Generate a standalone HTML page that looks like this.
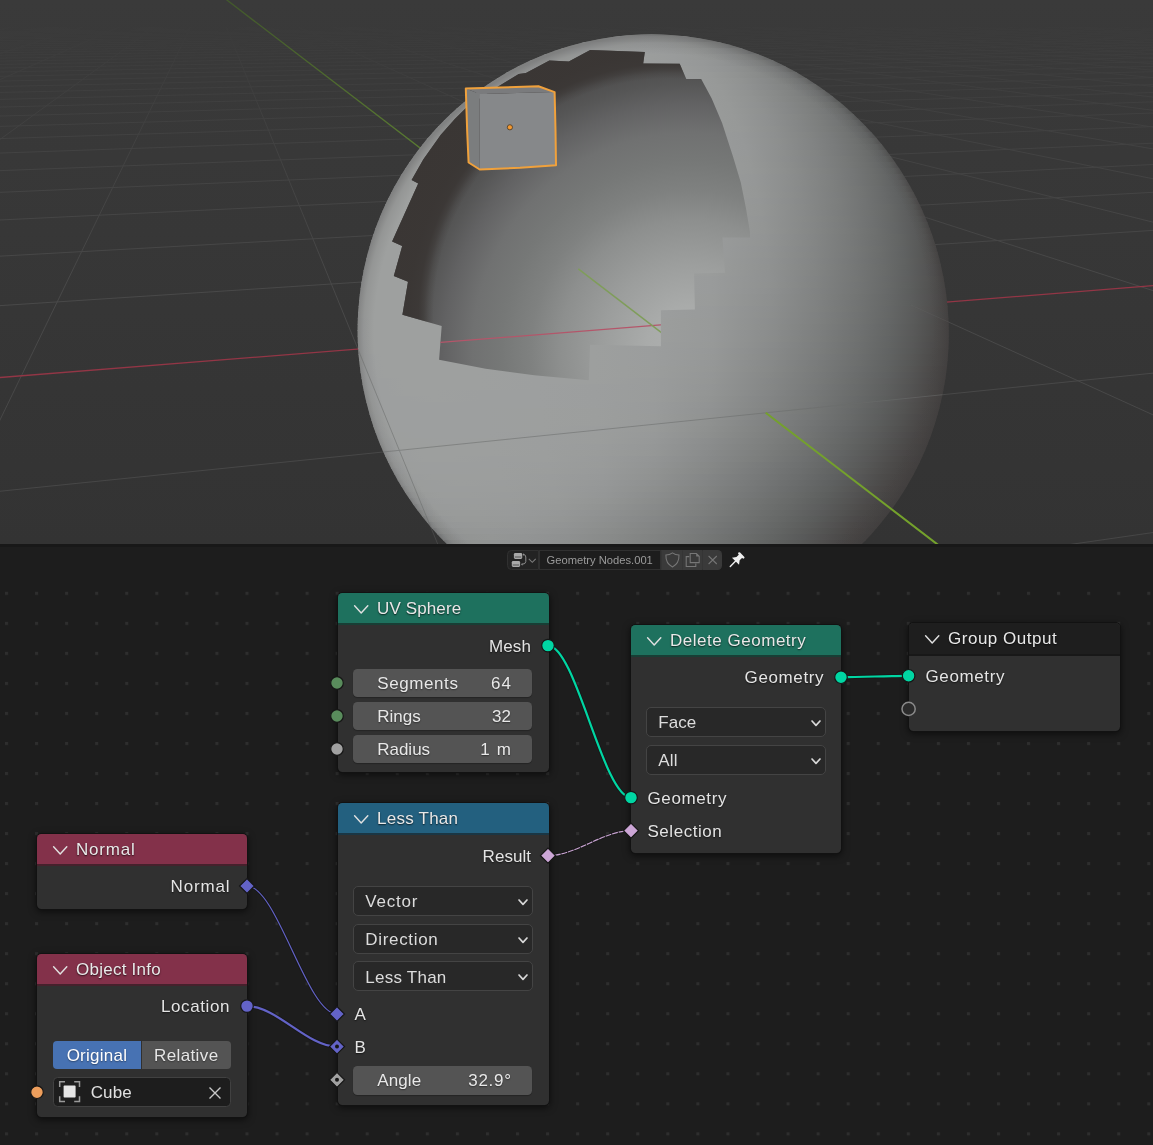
<!DOCTYPE html>
<html><head><meta charset="utf-8"><title>Blender</title>
<style>
html,body{margin:0;padding:0;background:#1d1d1d;}
body{width:1153px;height:1145px;overflow:hidden;position:relative;font-family:"Liberation Sans",sans-serif;}
#sep{position:absolute;left:0;top:544px;width:1153px;height:2.7px;background:#181818;z-index:3}
#ne{position:absolute;left:0;top:545px;width:1153px;height:600px;background-color:#1d1d1d;overflow:hidden;
}
#dots{position:absolute;left:0;top:0;width:1153px;height:600px}
#hdr{will-change:transform;position:absolute;left:507.2px;top:5.2px;width:214.7px;height:19.5px;}
.hb{position:absolute;top:0;height:19.5px;background:#232323;box-sizing:border-box;border:1px solid #303030;overflow:hidden}
.hl{background:#3a3a3a;border-color:#3a3a3a;border-left-color:#353535}
.ht{position:absolute;left:7px;top:2.5px;font-size:11.2px;color:#9b9b9b;white-space:nowrap;line-height:13px}
.node{will-change:transform;position:absolute;background:#303030;border-radius:4.5px;box-shadow:0 0 0 1px #121212,0 2px 7px 1px rgba(0,0,0,.55);color:#e4e4e4;font-size:17px;}
.nh{position:absolute;left:0;top:0;right:0;height:32.2px;border-radius:4.5px 4.5px 0 0;border-bottom:2px solid rgba(20,20,20,.55);box-sizing:border-box}
.nh span{position:absolute;left:39px;top:6.2px;line-height:20px;white-space:nowrap;text-shadow:0 1px 1.5px rgba(0,0,0,.7);color:#e9e9e9}
.geo{background:#1e715e}.conv{background:#23607f}.inpt{background:#83314a}.grp{background:#1e1e1e}
.chev{position:absolute;left:16px;top:11.2px;width:14px;height:10px;overflow:visible}
.chev path{fill:none;stroke:#e0e0e0;stroke-width:1.45;stroke-linecap:round;stroke-linejoin:round}
.out{margin-top:0.9px;position:absolute;right:17.5px;line-height:20px;height:20px;text-align:right;white-space:nowrap;text-shadow:0 1px 1.5px rgba(0,0,0,.6)}
.inp{margin-top:0.9px;position:absolute;left:16.5px;line-height:20px;height:20px;white-space:nowrap;text-shadow:0 1px 1.5px rgba(0,0,0,.6)}
.fld{position:absolute;left:15.2px;width:179.3px;height:28.5px;background:#545454;border-radius:4.5px;box-shadow:0 1px 1px rgba(0,0,0,.25)}
.fld span{position:absolute;top:5.3px;line-height:20px;white-space:nowrap;text-shadow:0 1px 1.5px rgba(0,0,0,.45);color:#e8e8e8}
.fld .l{left:24px}.fld .r{right:21.5px}
.dd{position:absolute;left:15.3px;width:180px;height:30px;background:#282828;border:1px solid #444;border-radius:5px;box-sizing:border-box}
.dd span{position:absolute;left:11px;top:5.2px;line-height:20px;white-space:nowrap;color:#dcdcdc}
.dchev{position:absolute;right:4.5px;top:11.5px;width:10px;height:7px;overflow:visible}
.dchev path{fill:none;stroke:#d8d8d8;stroke-width:1.7;stroke-linecap:round;stroke-linejoin:round}
.btn{position:absolute;height:28.2px;background:#545454;line-height:29.5px;text-align:center;color:#e6e6e6;text-shadow:0 1px 1.5px rgba(0,0,0,.4)}
.btn.on{background:#4772b3;color:#fff}
.txt{position:absolute;left:15.8px;width:178.6px;height:30px;background:#1d1d1d;border:1px solid #414141;border-radius:4.5px;box-sizing:border-box}
.txt span{position:absolute;left:37px;top:4.4px;line-height:20px;color:#e0e0e0}
</style>
</head>
<body>
<svg id="vp" width="1153" height="544" viewBox="0 0 1153 544" style="position:absolute;left:0;top:0;background:#363636">
<defs>
<linearGradient id="bg" x1="0" y1="0" x2="0" y2="544" gradientUnits="userSpaceOnUse"><stop offset="0" stop-color="#3a3a3a"/><stop offset="1" stop-color="#333333"/></linearGradient>
<linearGradient id="gfade" x1="0" y1="0" x2="0" y2="544" gradientUnits="userSpaceOnUse">
<stop offset="0.03" stop-color="#fff" stop-opacity="0"/><stop offset="0.12" stop-color="#fff" stop-opacity="0.25"/><stop offset="0.3" stop-color="#fff" stop-opacity="0.6"/><stop offset="0.55" stop-color="#fff" stop-opacity="1"/>
</linearGradient>
<linearGradient id="gline" gradientUnits="userSpaceOnUse" x1="215" y1="-10" x2="420" y2="147"><stop offset="0" stop-color="#41572b"/><stop offset="0.5" stop-color="#4d692d"/><stop offset="1" stop-color="#5a7c31"/></linearGradient>
<mask id="gmask" maskUnits="userSpaceOnUse" x="0" y="0" width="1153" height="544"><rect width="1153" height="544" fill="url(#gfade)"/></mask>
<radialGradient id="rim" gradientUnits="userSpaceOnUse" cx="0" cy="0" r="1" gradientTransform="translate(653.2 332) rotate(71) scale(298 295.3)">
<stop offset="0.94" stop-color="#3d3b3c" stop-opacity="0"/><stop offset="0.975" stop-color="#3d3b3c" stop-opacity="0.1"/><stop offset="1" stop-color="#3d3b3c" stop-opacity="0.3"/>
</radialGradient>
<radialGradient id="inner" gradientUnits="userSpaceOnUse" cx="690" cy="350" r="290">
<stop offset="0" stop-color="#aeb0af"/><stop offset="0.15" stop-color="#a9abaa"/><stop offset="0.3" stop-color="#9c9e9d"/><stop offset="0.45" stop-color="#8d8f8e"/><stop offset="0.55" stop-color="#7f8180"/><stop offset="0.65" stop-color="#767877"/><stop offset="0.75" stop-color="#707171"/><stop offset="0.85" stop-color="#626263"/><stop offset="0.92" stop-color="#565656"/><stop offset="1" stop-color="#4c4b4b"/>
</radialGradient>
<radialGradient id="ishadow" gradientUnits="userSpaceOnUse" cx="670" cy="315" r="300">
<stop offset="0.788" stop-color="#3a3634" stop-opacity="0"/><stop offset="0.806" stop-color="#3a3634" stop-opacity="0.28"/><stop offset="0.82" stop-color="#3a3634" stop-opacity="0.62"/><stop offset="0.838" stop-color="#3a3634" stop-opacity="0.9"/><stop offset="0.87" stop-color="#3a3634" stop-opacity="0.97"/><stop offset="1" stop-color="#3a3634" stop-opacity="1"/>
</radialGradient>
<linearGradient id="r0" gradientUnits="userSpaceOnUse" x1="608.2" y1="0" x2="694.9" y2="0"><stop offset="0" stop-color="#979999"/><stop offset="0.008" stop-color="#979999"/><stop offset="0.02" stop-color="#979998"/><stop offset="0.04" stop-color="#979998"/><stop offset="0.07" stop-color="#969898"/><stop offset="0.12" stop-color="#969897"/><stop offset="0.2" stop-color="#959796"/><stop offset="0.3" stop-color="#949695"/><stop offset="0.4" stop-color="#929494"/><stop offset="0.5" stop-color="#909292"/><stop offset="0.6" stop-color="#8f9190"/><stop offset="0.7" stop-color="#8d8f8e"/><stop offset="0.78" stop-color="#8c8e8d"/><stop offset="0.85" stop-color="#8a8c8c"/><stop offset="0.9" stop-color="#898b8b"/><stop offset="0.94" stop-color="#898b8a"/><stop offset="0.97" stop-color="#888a8a"/><stop offset="0.985" stop-color="#888a89"/><stop offset="1" stop-color="#888a89"/></linearGradient>
<linearGradient id="r1" gradientUnits="userSpaceOnUse" x1="599.2" y1="0" x2="704.0" y2="0"><stop offset="0" stop-color="#989a9a"/><stop offset="0.008" stop-color="#999b9a"/><stop offset="0.02" stop-color="#999b9a"/><stop offset="0.04" stop-color="#999b9b"/><stop offset="0.07" stop-color="#999b9b"/><stop offset="0.12" stop-color="#999b9b"/><stop offset="0.2" stop-color="#999b9b"/><stop offset="0.3" stop-color="#999b9a"/><stop offset="0.4" stop-color="#989a9a"/><stop offset="0.5" stop-color="#979999"/><stop offset="0.6" stop-color="#969897"/><stop offset="0.7" stop-color="#949695"/><stop offset="0.78" stop-color="#919393"/><stop offset="0.85" stop-color="#8f9191"/><stop offset="0.9" stop-color="#8d8f8e"/><stop offset="0.94" stop-color="#8b8d8d"/><stop offset="0.97" stop-color="#898b8b"/><stop offset="0.985" stop-color="#888a8a"/><stop offset="1" stop-color="#868887"/></linearGradient>
<linearGradient id="r2" gradientUnits="userSpaceOnUse" x1="573.0" y1="0" x2="730.2" y2="0"><stop offset="0" stop-color="#9a9c9b"/><stop offset="0.008" stop-color="#9b9d9c"/><stop offset="0.02" stop-color="#9b9d9c"/><stop offset="0.04" stop-color="#9b9d9d"/><stop offset="0.07" stop-color="#9b9d9d"/><stop offset="0.12" stop-color="#9b9d9d"/><stop offset="0.2" stop-color="#9b9d9d"/><stop offset="0.3" stop-color="#9b9d9c"/><stop offset="0.4" stop-color="#9a9c9c"/><stop offset="0.5" stop-color="#999b9b"/><stop offset="0.6" stop-color="#979999"/><stop offset="0.7" stop-color="#959796"/><stop offset="0.78" stop-color="#929493"/><stop offset="0.85" stop-color="#8e908f"/><stop offset="0.9" stop-color="#8b8d8c"/><stop offset="0.94" stop-color="#888a89"/><stop offset="0.97" stop-color="#858787"/><stop offset="0.985" stop-color="#838585"/><stop offset="1" stop-color="#808281"/></linearGradient>
<linearGradient id="r3" gradientUnits="userSpaceOnUse" x1="554.0" y1="0" x2="749.3" y2="0"><stop offset="0" stop-color="#9b9d9c"/><stop offset="0.008" stop-color="#9c9e9d"/><stop offset="0.02" stop-color="#9c9e9d"/><stop offset="0.04" stop-color="#9c9e9d"/><stop offset="0.07" stop-color="#9c9e9e"/><stop offset="0.12" stop-color="#9c9e9e"/><stop offset="0.2" stop-color="#9c9e9e"/><stop offset="0.3" stop-color="#9c9e9d"/><stop offset="0.4" stop-color="#9b9d9d"/><stop offset="0.5" stop-color="#9a9c9c"/><stop offset="0.6" stop-color="#989a9a"/><stop offset="0.7" stop-color="#969897"/><stop offset="0.78" stop-color="#929493"/><stop offset="0.85" stop-color="#8d8f8f"/><stop offset="0.9" stop-color="#898b8b"/><stop offset="0.94" stop-color="#868887"/><stop offset="0.97" stop-color="#828484"/><stop offset="0.985" stop-color="#808282"/><stop offset="1" stop-color="#7b7d7d"/></linearGradient>
<linearGradient id="r4" gradientUnits="userSpaceOnUse" x1="538.4" y1="0" x2="764.9" y2="0"><stop offset="0" stop-color="#9b9d9d"/><stop offset="0.008" stop-color="#9c9e9e"/><stop offset="0.02" stop-color="#9c9e9e"/><stop offset="0.04" stop-color="#9c9e9e"/><stop offset="0.07" stop-color="#9d9f9e"/><stop offset="0.12" stop-color="#9d9f9e"/><stop offset="0.2" stop-color="#9d9f9e"/><stop offset="0.3" stop-color="#9c9e9e"/><stop offset="0.4" stop-color="#9c9e9d"/><stop offset="0.5" stop-color="#9b9d9c"/><stop offset="0.6" stop-color="#999b9b"/><stop offset="0.7" stop-color="#969897"/><stop offset="0.78" stop-color="#929493"/><stop offset="0.85" stop-color="#8c8e8e"/><stop offset="0.9" stop-color="#888a89"/><stop offset="0.94" stop-color="#848685"/><stop offset="0.97" stop-color="#808281"/><stop offset="0.985" stop-color="#7d7f7f"/><stop offset="1" stop-color="#787a79"/></linearGradient>
<linearGradient id="r5" gradientUnits="userSpaceOnUse" x1="525.1" y1="0" x2="778.4" y2="0"><stop offset="0" stop-color="#9c9e9d"/><stop offset="0.008" stop-color="#9c9e9e"/><stop offset="0.02" stop-color="#9d9f9e"/><stop offset="0.04" stop-color="#9d9f9e"/><stop offset="0.07" stop-color="#9d9f9e"/><stop offset="0.12" stop-color="#9d9f9e"/><stop offset="0.2" stop-color="#9d9f9e"/><stop offset="0.3" stop-color="#9d9f9e"/><stop offset="0.4" stop-color="#9c9e9e"/><stop offset="0.5" stop-color="#9b9d9d"/><stop offset="0.6" stop-color="#999b9b"/><stop offset="0.7" stop-color="#969898"/><stop offset="0.78" stop-color="#919393"/><stop offset="0.85" stop-color="#8b8d8d"/><stop offset="0.9" stop-color="#868888"/><stop offset="0.94" stop-color="#828483"/><stop offset="0.97" stop-color="#7d7f7f"/><stop offset="0.985" stop-color="#7a7c7c"/><stop offset="1" stop-color="#747676"/></linearGradient>
<linearGradient id="r6" gradientUnits="userSpaceOnUse" x1="513.2" y1="0" x2="790.3" y2="0"><stop offset="0" stop-color="#9c9e9e"/><stop offset="0.008" stop-color="#9d9f9e"/><stop offset="0.02" stop-color="#9d9f9e"/><stop offset="0.04" stop-color="#9d9f9e"/><stop offset="0.07" stop-color="#9d9f9f"/><stop offset="0.12" stop-color="#9d9f9f"/><stop offset="0.2" stop-color="#9d9f9f"/><stop offset="0.3" stop-color="#9d9f9e"/><stop offset="0.4" stop-color="#9c9e9e"/><stop offset="0.5" stop-color="#9b9d9d"/><stop offset="0.6" stop-color="#9a9c9b"/><stop offset="0.7" stop-color="#969898"/><stop offset="0.78" stop-color="#919393"/><stop offset="0.85" stop-color="#8b8d8c"/><stop offset="0.9" stop-color="#858787"/><stop offset="0.94" stop-color="#808282"/><stop offset="0.97" stop-color="#7b7d7d"/><stop offset="0.985" stop-color="#787a7a"/><stop offset="1" stop-color="#727473"/></linearGradient>
<linearGradient id="r7" gradientUnits="userSpaceOnUse" x1="502.6" y1="0" x2="801.0" y2="0"><stop offset="0" stop-color="#9c9e9e"/><stop offset="0.008" stop-color="#9d9f9e"/><stop offset="0.02" stop-color="#9d9f9f"/><stop offset="0.04" stop-color="#9d9f9f"/><stop offset="0.07" stop-color="#9d9f9f"/><stop offset="0.12" stop-color="#9d9f9f"/><stop offset="0.2" stop-color="#9d9f9f"/><stop offset="0.3" stop-color="#9d9f9e"/><stop offset="0.4" stop-color="#9d9f9e"/><stop offset="0.5" stop-color="#9c9e9d"/><stop offset="0.6" stop-color="#9a9c9c"/><stop offset="0.7" stop-color="#979998"/><stop offset="0.78" stop-color="#919392"/><stop offset="0.85" stop-color="#8a8c8b"/><stop offset="0.9" stop-color="#848685"/><stop offset="0.94" stop-color="#7e8080"/><stop offset="0.97" stop-color="#797b7b"/><stop offset="0.985" stop-color="#767877"/><stop offset="1" stop-color="#6f7170"/></linearGradient>
<linearGradient id="r8" gradientUnits="userSpaceOnUse" x1="492.8" y1="0" x2="810.8" y2="0"><stop offset="0" stop-color="#9d9f9e"/><stop offset="0.008" stop-color="#9d9f9f"/><stop offset="0.02" stop-color="#9d9f9f"/><stop offset="0.04" stop-color="#9d9f9f"/><stop offset="0.07" stop-color="#9d9f9f"/><stop offset="0.12" stop-color="#9d9f9f"/><stop offset="0.2" stop-color="#9d9f9f"/><stop offset="0.3" stop-color="#9d9f9f"/><stop offset="0.4" stop-color="#9d9f9e"/><stop offset="0.5" stop-color="#9c9e9d"/><stop offset="0.6" stop-color="#9a9c9c"/><stop offset="0.7" stop-color="#979998"/><stop offset="0.78" stop-color="#919392"/><stop offset="0.85" stop-color="#898b8b"/><stop offset="0.9" stop-color="#838584"/><stop offset="0.94" stop-color="#7d7f7e"/><stop offset="0.97" stop-color="#777979"/><stop offset="0.985" stop-color="#747675"/><stop offset="1" stop-color="#6c6e6e"/></linearGradient>
<linearGradient id="r9" gradientUnits="userSpaceOnUse" x1="483.9" y1="0" x2="819.8" y2="0"><stop offset="0" stop-color="#9d9f9e"/><stop offset="0.008" stop-color="#9d9f9f"/><stop offset="0.02" stop-color="#9d9f9f"/><stop offset="0.04" stop-color="#9d9f9f"/><stop offset="0.07" stop-color="#9d9f9f"/><stop offset="0.12" stop-color="#9d9f9f"/><stop offset="0.2" stop-color="#9d9f9f"/><stop offset="0.3" stop-color="#9d9f9f"/><stop offset="0.4" stop-color="#9d9f9e"/><stop offset="0.5" stop-color="#9c9e9e"/><stop offset="0.6" stop-color="#9a9c9c"/><stop offset="0.7" stop-color="#979998"/><stop offset="0.78" stop-color="#909292"/><stop offset="0.85" stop-color="#888a8a"/><stop offset="0.9" stop-color="#828483"/><stop offset="0.94" stop-color="#7b7d7d"/><stop offset="0.97" stop-color="#767877"/><stop offset="0.985" stop-color="#727473"/><stop offset="1" stop-color="#6a6c6b"/></linearGradient>
<linearGradient id="r10" gradientUnits="userSpaceOnUse" x1="475.6" y1="0" x2="828.1" y2="0"><stop offset="0" stop-color="#9d9f9e"/><stop offset="0.008" stop-color="#9d9f9f"/><stop offset="0.02" stop-color="#9d9f9f"/><stop offset="0.04" stop-color="#9d9f9f"/><stop offset="0.07" stop-color="#9ea09f"/><stop offset="0.12" stop-color="#9ea09f"/><stop offset="0.2" stop-color="#9d9f9f"/><stop offset="0.3" stop-color="#9d9f9f"/><stop offset="0.4" stop-color="#9d9f9e"/><stop offset="0.5" stop-color="#9c9e9e"/><stop offset="0.6" stop-color="#9b9d9c"/><stop offset="0.7" stop-color="#979998"/><stop offset="0.78" stop-color="#909291"/><stop offset="0.85" stop-color="#888a89"/><stop offset="0.9" stop-color="#818382"/><stop offset="0.94" stop-color="#7a7c7c"/><stop offset="0.97" stop-color="#747676"/><stop offset="0.985" stop-color="#707272"/><stop offset="1" stop-color="#686a69"/></linearGradient>
<linearGradient id="r11" gradientUnits="userSpaceOnUse" x1="467.9" y1="0" x2="835.9" y2="0"><stop offset="0" stop-color="#9d9f9e"/><stop offset="0.008" stop-color="#9d9f9f"/><stop offset="0.02" stop-color="#9d9f9f"/><stop offset="0.04" stop-color="#9d9f9f"/><stop offset="0.07" stop-color="#9ea09f"/><stop offset="0.12" stop-color="#9ea09f"/><stop offset="0.2" stop-color="#9ea09f"/><stop offset="0.3" stop-color="#9d9f9f"/><stop offset="0.4" stop-color="#9d9f9f"/><stop offset="0.5" stop-color="#9c9e9e"/><stop offset="0.6" stop-color="#9b9d9c"/><stop offset="0.7" stop-color="#979998"/><stop offset="0.78" stop-color="#909291"/><stop offset="0.85" stop-color="#878988"/><stop offset="0.9" stop-color="#808281"/><stop offset="0.94" stop-color="#797b7a"/><stop offset="0.97" stop-color="#727474"/><stop offset="0.985" stop-color="#6e7070"/><stop offset="1" stop-color="#666867"/></linearGradient>
<linearGradient id="r12" gradientUnits="userSpaceOnUse" x1="460.7" y1="0" x2="843.2" y2="0"><stop offset="0" stop-color="#9d9f9e"/><stop offset="0.008" stop-color="#9d9f9f"/><stop offset="0.02" stop-color="#9d9f9f"/><stop offset="0.04" stop-color="#9ea09f"/><stop offset="0.07" stop-color="#9ea09f"/><stop offset="0.12" stop-color="#9ea09f"/><stop offset="0.2" stop-color="#9ea09f"/><stop offset="0.3" stop-color="#9d9f9f"/><stop offset="0.4" stop-color="#9d9f9f"/><stop offset="0.5" stop-color="#9c9e9e"/><stop offset="0.6" stop-color="#9b9d9c"/><stop offset="0.7" stop-color="#979998"/><stop offset="0.78" stop-color="#8f9191"/><stop offset="0.85" stop-color="#868888"/><stop offset="0.9" stop-color="#7f8180"/><stop offset="0.94" stop-color="#787a79"/><stop offset="0.97" stop-color="#717372"/><stop offset="0.985" stop-color="#6d6f6e"/><stop offset="1" stop-color="#646665"/></linearGradient>
<linearGradient id="r13" gradientUnits="userSpaceOnUse" x1="453.9" y1="0" x2="850.0" y2="0"><stop offset="0" stop-color="#9d9f9f"/><stop offset="0.008" stop-color="#9d9f9f"/><stop offset="0.02" stop-color="#9ea09f"/><stop offset="0.04" stop-color="#9ea09f"/><stop offset="0.07" stop-color="#9ea09f"/><stop offset="0.12" stop-color="#9ea09f"/><stop offset="0.2" stop-color="#9ea09f"/><stop offset="0.3" stop-color="#9d9f9f"/><stop offset="0.4" stop-color="#9d9f9f"/><stop offset="0.5" stop-color="#9c9e9e"/><stop offset="0.6" stop-color="#9b9d9c"/><stop offset="0.7" stop-color="#979998"/><stop offset="0.78" stop-color="#8f9190"/><stop offset="0.85" stop-color="#858787"/><stop offset="0.9" stop-color="#7e807f"/><stop offset="0.94" stop-color="#767878"/><stop offset="0.97" stop-color="#707271"/><stop offset="0.985" stop-color="#6b6d6d"/><stop offset="1" stop-color="#626463"/></linearGradient>
<linearGradient id="r14" gradientUnits="userSpaceOnUse" x1="447.5" y1="0" x2="856.5" y2="0"><stop offset="0" stop-color="#9d9f9f"/><stop offset="0.008" stop-color="#9d9f9f"/><stop offset="0.02" stop-color="#9ea09f"/><stop offset="0.04" stop-color="#9ea09f"/><stop offset="0.07" stop-color="#9ea09f"/><stop offset="0.12" stop-color="#9ea09f"/><stop offset="0.2" stop-color="#9ea09f"/><stop offset="0.3" stop-color="#9ea09f"/><stop offset="0.4" stop-color="#9d9f9f"/><stop offset="0.5" stop-color="#9d9f9e"/><stop offset="0.6" stop-color="#9b9d9c"/><stop offset="0.7" stop-color="#979998"/><stop offset="0.78" stop-color="#8e9090"/><stop offset="0.85" stop-color="#858786"/><stop offset="0.9" stop-color="#7d7f7e"/><stop offset="0.94" stop-color="#757777"/><stop offset="0.97" stop-color="#6e7070"/><stop offset="0.985" stop-color="#696b6b"/><stop offset="1" stop-color="#606261"/></linearGradient>
<linearGradient id="r15" gradientUnits="userSpaceOnUse" x1="441.5" y1="0" x2="862.5" y2="0"><stop offset="0" stop-color="#9d9f9f"/><stop offset="0.008" stop-color="#9d9f9f"/><stop offset="0.02" stop-color="#9ea09f"/><stop offset="0.04" stop-color="#9ea09f"/><stop offset="0.07" stop-color="#9ea09f"/><stop offset="0.12" stop-color="#9ea09f"/><stop offset="0.2" stop-color="#9ea09f"/><stop offset="0.3" stop-color="#9ea09f"/><stop offset="0.4" stop-color="#9d9f9f"/><stop offset="0.5" stop-color="#9d9f9e"/><stop offset="0.6" stop-color="#9b9d9c"/><stop offset="0.7" stop-color="#979998"/><stop offset="0.78" stop-color="#8e9090"/><stop offset="0.85" stop-color="#848686"/><stop offset="0.9" stop-color="#7c7e7d"/><stop offset="0.94" stop-color="#747676"/><stop offset="0.97" stop-color="#6d6f6e"/><stop offset="0.985" stop-color="#686a6a"/><stop offset="1" stop-color="#5e6060"/></linearGradient>
<linearGradient id="r16" gradientUnits="userSpaceOnUse" x1="435.9" y1="0" x2="868.3" y2="0"><stop offset="0" stop-color="#9d9f9f"/><stop offset="0.008" stop-color="#9ea09f"/><stop offset="0.02" stop-color="#9ea09f"/><stop offset="0.04" stop-color="#9ea09f"/><stop offset="0.07" stop-color="#9ea09f"/><stop offset="0.12" stop-color="#9ea09f"/><stop offset="0.2" stop-color="#9ea09f"/><stop offset="0.3" stop-color="#9ea09f"/><stop offset="0.4" stop-color="#9d9f9f"/><stop offset="0.5" stop-color="#9d9f9e"/><stop offset="0.6" stop-color="#9b9d9c"/><stop offset="0.7" stop-color="#979998"/><stop offset="0.78" stop-color="#8e908f"/><stop offset="0.85" stop-color="#838585"/><stop offset="0.9" stop-color="#7b7d7c"/><stop offset="0.94" stop-color="#737574"/><stop offset="0.97" stop-color="#6b6d6d"/><stop offset="0.985" stop-color="#676968"/><stop offset="1" stop-color="#5d5e5e"/></linearGradient>
<linearGradient id="r17" gradientUnits="userSpaceOnUse" x1="430.5" y1="0" x2="873.7" y2="0"><stop offset="0" stop-color="#9d9f9f"/><stop offset="0.008" stop-color="#9ea09f"/><stop offset="0.02" stop-color="#9ea09f"/><stop offset="0.04" stop-color="#9ea09f"/><stop offset="0.07" stop-color="#9ea09f"/><stop offset="0.12" stop-color="#9ea09f"/><stop offset="0.2" stop-color="#9ea09f"/><stop offset="0.3" stop-color="#9ea09f"/><stop offset="0.4" stop-color="#9d9f9f"/><stop offset="0.5" stop-color="#9d9f9e"/><stop offset="0.6" stop-color="#9b9d9d"/><stop offset="0.7" stop-color="#969898"/><stop offset="0.78" stop-color="#8d8f8f"/><stop offset="0.85" stop-color="#838584"/><stop offset="0.9" stop-color="#7a7c7c"/><stop offset="0.94" stop-color="#727473"/><stop offset="0.97" stop-color="#6a6c6c"/><stop offset="0.985" stop-color="#656767"/><stop offset="1" stop-color="#5b5c5c"/></linearGradient>
<linearGradient id="r18" gradientUnits="userSpaceOnUse" x1="425.4" y1="0" x2="878.9" y2="0"><stop offset="0" stop-color="#9d9f9f"/><stop offset="0.008" stop-color="#9ea09f"/><stop offset="0.02" stop-color="#9ea09f"/><stop offset="0.04" stop-color="#9ea09f"/><stop offset="0.07" stop-color="#9ea09f"/><stop offset="0.12" stop-color="#9ea09f"/><stop offset="0.2" stop-color="#9ea09f"/><stop offset="0.3" stop-color="#9ea09f"/><stop offset="0.4" stop-color="#9d9f9f"/><stop offset="0.5" stop-color="#9d9f9e"/><stop offset="0.6" stop-color="#9b9d9d"/><stop offset="0.7" stop-color="#969898"/><stop offset="0.78" stop-color="#8d8f8e"/><stop offset="0.85" stop-color="#828484"/><stop offset="0.9" stop-color="#797b7b"/><stop offset="0.94" stop-color="#717372"/><stop offset="0.97" stop-color="#696b6a"/><stop offset="0.985" stop-color="#646665"/><stop offset="1" stop-color="#5a5b5a"/></linearGradient>
<linearGradient id="r19" gradientUnits="userSpaceOnUse" x1="420.6" y1="0" x2="883.8" y2="0"><stop offset="0" stop-color="#9d9f9f"/><stop offset="0.008" stop-color="#9ea09f"/><stop offset="0.02" stop-color="#9ea09f"/><stop offset="0.04" stop-color="#9ea09f"/><stop offset="0.07" stop-color="#9ea09f"/><stop offset="0.12" stop-color="#9ea09f"/><stop offset="0.2" stop-color="#9ea09f"/><stop offset="0.3" stop-color="#9ea09f"/><stop offset="0.4" stop-color="#9d9f9f"/><stop offset="0.5" stop-color="#9d9f9e"/><stop offset="0.6" stop-color="#9b9d9d"/><stop offset="0.7" stop-color="#969898"/><stop offset="0.78" stop-color="#8c8e8e"/><stop offset="0.85" stop-color="#818383"/><stop offset="0.9" stop-color="#787a7a"/><stop offset="0.94" stop-color="#707271"/><stop offset="0.97" stop-color="#686a69"/><stop offset="0.985" stop-color="#636564"/><stop offset="1" stop-color="#585958"/></linearGradient>
<linearGradient id="r20" gradientUnits="userSpaceOnUse" x1="416.0" y1="0" x2="888.4" y2="0"><stop offset="0" stop-color="#9d9f9f"/><stop offset="0.008" stop-color="#9ea09f"/><stop offset="0.02" stop-color="#9ea09f"/><stop offset="0.04" stop-color="#9ea09f"/><stop offset="0.07" stop-color="#9ea09f"/><stop offset="0.12" stop-color="#9ea09f"/><stop offset="0.2" stop-color="#9ea09f"/><stop offset="0.3" stop-color="#9ea09f"/><stop offset="0.4" stop-color="#9d9f9f"/><stop offset="0.5" stop-color="#9d9f9e"/><stop offset="0.6" stop-color="#9b9d9d"/><stop offset="0.7" stop-color="#969898"/><stop offset="0.78" stop-color="#8c8e8d"/><stop offset="0.85" stop-color="#818382"/><stop offset="0.9" stop-color="#777979"/><stop offset="0.94" stop-color="#6f7170"/><stop offset="0.97" stop-color="#676968"/><stop offset="0.985" stop-color="#616363"/><stop offset="1" stop-color="#575857"/></linearGradient>
<linearGradient id="r21" gradientUnits="userSpaceOnUse" x1="411.7" y1="0" x2="892.8" y2="0"><stop offset="0" stop-color="#9d9f9f"/><stop offset="0.008" stop-color="#9ea09f"/><stop offset="0.02" stop-color="#9ea09f"/><stop offset="0.04" stop-color="#9ea09f"/><stop offset="0.07" stop-color="#9ea09f"/><stop offset="0.12" stop-color="#9ea09f"/><stop offset="0.2" stop-color="#9ea09f"/><stop offset="0.3" stop-color="#9ea09f"/><stop offset="0.4" stop-color="#9d9f9f"/><stop offset="0.5" stop-color="#9d9f9e"/><stop offset="0.6" stop-color="#9b9d9d"/><stop offset="0.7" stop-color="#969897"/><stop offset="0.78" stop-color="#8b8d8d"/><stop offset="0.85" stop-color="#808282"/><stop offset="0.9" stop-color="#777978"/><stop offset="0.94" stop-color="#6e706f"/><stop offset="0.97" stop-color="#656767"/><stop offset="0.985" stop-color="#606261"/><stop offset="1" stop-color="#565655"/></linearGradient>
<linearGradient id="r22" gradientUnits="userSpaceOnUse" x1="407.6" y1="0" x2="897.0" y2="0"><stop offset="0" stop-color="#9d9f9f"/><stop offset="0.008" stop-color="#9ea09f"/><stop offset="0.02" stop-color="#9ea09f"/><stop offset="0.04" stop-color="#9ea09f"/><stop offset="0.07" stop-color="#9ea09f"/><stop offset="0.12" stop-color="#9ea09f"/><stop offset="0.2" stop-color="#9ea09f"/><stop offset="0.3" stop-color="#9ea09f"/><stop offset="0.4" stop-color="#9d9f9f"/><stop offset="0.5" stop-color="#9d9f9e"/><stop offset="0.6" stop-color="#9b9d9d"/><stop offset="0.7" stop-color="#969897"/><stop offset="0.78" stop-color="#8b8d8c"/><stop offset="0.85" stop-color="#7f8181"/><stop offset="0.9" stop-color="#767877"/><stop offset="0.94" stop-color="#6d6f6e"/><stop offset="0.97" stop-color="#646666"/><stop offset="0.985" stop-color="#5f6160"/><stop offset="1" stop-color="#545454"/></linearGradient>
<linearGradient id="r23" gradientUnits="userSpaceOnUse" x1="403.7" y1="0" x2="900.9" y2="0"><stop offset="0" stop-color="#9d9f9f"/><stop offset="0.008" stop-color="#9ea09f"/><stop offset="0.02" stop-color="#9ea09f"/><stop offset="0.04" stop-color="#9ea09f"/><stop offset="0.07" stop-color="#9ea09f"/><stop offset="0.12" stop-color="#9ea09f"/><stop offset="0.2" stop-color="#9ea09f"/><stop offset="0.3" stop-color="#9ea09f"/><stop offset="0.4" stop-color="#9d9f9f"/><stop offset="0.5" stop-color="#9d9f9e"/><stop offset="0.6" stop-color="#9b9d9d"/><stop offset="0.7" stop-color="#969897"/><stop offset="0.78" stop-color="#8b8d8c"/><stop offset="0.85" stop-color="#7f8180"/><stop offset="0.9" stop-color="#757777"/><stop offset="0.94" stop-color="#6c6e6d"/><stop offset="0.97" stop-color="#636565"/><stop offset="0.985" stop-color="#5e605f"/><stop offset="1" stop-color="#535352"/></linearGradient>
<linearGradient id="r24" gradientUnits="userSpaceOnUse" x1="400.0" y1="0" x2="904.7" y2="0"><stop offset="0" stop-color="#9d9f9f"/><stop offset="0.008" stop-color="#9ea09f"/><stop offset="0.02" stop-color="#9ea09f"/><stop offset="0.04" stop-color="#9ea09f"/><stop offset="0.07" stop-color="#9ea09f"/><stop offset="0.12" stop-color="#9ea09f"/><stop offset="0.2" stop-color="#9ea09f"/><stop offset="0.3" stop-color="#9ea09f"/><stop offset="0.4" stop-color="#9d9f9f"/><stop offset="0.5" stop-color="#9d9f9e"/><stop offset="0.6" stop-color="#9b9d9c"/><stop offset="0.7" stop-color="#959797"/><stop offset="0.78" stop-color="#8a8c8c"/><stop offset="0.85" stop-color="#7e8080"/><stop offset="0.9" stop-color="#747676"/><stop offset="0.94" stop-color="#6b6d6c"/><stop offset="0.97" stop-color="#626464"/><stop offset="0.985" stop-color="#5d5e5e"/><stop offset="1" stop-color="#525251"/></linearGradient>
<linearGradient id="r25" gradientUnits="userSpaceOnUse" x1="396.5" y1="0" x2="908.3" y2="0"><stop offset="0" stop-color="#9d9f9f"/><stop offset="0.008" stop-color="#9ea09f"/><stop offset="0.02" stop-color="#9ea09f"/><stop offset="0.04" stop-color="#9ea09f"/><stop offset="0.07" stop-color="#9ea09f"/><stop offset="0.12" stop-color="#9ea09f"/><stop offset="0.2" stop-color="#9ea09f"/><stop offset="0.3" stop-color="#9ea09f"/><stop offset="0.4" stop-color="#9d9f9f"/><stop offset="0.5" stop-color="#9d9f9e"/><stop offset="0.6" stop-color="#9b9d9c"/><stop offset="0.7" stop-color="#959797"/><stop offset="0.78" stop-color="#8a8c8b"/><stop offset="0.85" stop-color="#7e807f"/><stop offset="0.9" stop-color="#737575"/><stop offset="0.94" stop-color="#6a6c6b"/><stop offset="0.97" stop-color="#616363"/><stop offset="0.985" stop-color="#5c5d5d"/><stop offset="1" stop-color="#515050"/></linearGradient>
<linearGradient id="r26" gradientUnits="userSpaceOnUse" x1="393.2" y1="0" x2="911.7" y2="0"><stop offset="0" stop-color="#9d9f9f"/><stop offset="0.008" stop-color="#9ea09f"/><stop offset="0.02" stop-color="#9ea09f"/><stop offset="0.04" stop-color="#9ea09f"/><stop offset="0.07" stop-color="#9ea09f"/><stop offset="0.12" stop-color="#9ea09f"/><stop offset="0.2" stop-color="#9ea09f"/><stop offset="0.3" stop-color="#9ea09f"/><stop offset="0.4" stop-color="#9d9f9f"/><stop offset="0.5" stop-color="#9d9f9e"/><stop offset="0.6" stop-color="#9b9d9c"/><stop offset="0.7" stop-color="#959796"/><stop offset="0.78" stop-color="#898b8b"/><stop offset="0.85" stop-color="#7d7f7e"/><stop offset="0.9" stop-color="#737574"/><stop offset="0.94" stop-color="#696b6b"/><stop offset="0.97" stop-color="#606262"/><stop offset="0.985" stop-color="#5b5c5b"/><stop offset="1" stop-color="#504f4e"/></linearGradient>
<linearGradient id="r27" gradientUnits="userSpaceOnUse" x1="390.0" y1="0" x2="914.9" y2="0"><stop offset="0" stop-color="#9d9f9f"/><stop offset="0.008" stop-color="#9ea09f"/><stop offset="0.02" stop-color="#9ea09f"/><stop offset="0.04" stop-color="#9ea09f"/><stop offset="0.07" stop-color="#9ea09f"/><stop offset="0.12" stop-color="#9ea09f"/><stop offset="0.2" stop-color="#9ea09f"/><stop offset="0.3" stop-color="#9ea09f"/><stop offset="0.4" stop-color="#9d9f9f"/><stop offset="0.5" stop-color="#9d9f9e"/><stop offset="0.6" stop-color="#9b9d9c"/><stop offset="0.7" stop-color="#959796"/><stop offset="0.78" stop-color="#898b8a"/><stop offset="0.85" stop-color="#7c7e7e"/><stop offset="0.9" stop-color="#727473"/><stop offset="0.94" stop-color="#686a6a"/><stop offset="0.97" stop-color="#5f6161"/><stop offset="0.985" stop-color="#5a5b5a"/><stop offset="1" stop-color="#4f4e4d"/></linearGradient>
<linearGradient id="r28" gradientUnits="userSpaceOnUse" x1="387.0" y1="0" x2="917.9" y2="0"><stop offset="0" stop-color="#9d9f9f"/><stop offset="0.008" stop-color="#9ea09f"/><stop offset="0.02" stop-color="#9ea09f"/><stop offset="0.04" stop-color="#9ea09f"/><stop offset="0.07" stop-color="#9ea09f"/><stop offset="0.12" stop-color="#9ea09f"/><stop offset="0.2" stop-color="#9ea09f"/><stop offset="0.3" stop-color="#9ea09f"/><stop offset="0.4" stop-color="#9d9f9f"/><stop offset="0.5" stop-color="#9d9f9e"/><stop offset="0.6" stop-color="#9b9d9c"/><stop offset="0.7" stop-color="#949696"/><stop offset="0.78" stop-color="#888a8a"/><stop offset="0.85" stop-color="#7c7e7d"/><stop offset="0.9" stop-color="#717373"/><stop offset="0.94" stop-color="#676969"/><stop offset="0.97" stop-color="#5e6060"/><stop offset="0.985" stop-color="#595a59"/><stop offset="1" stop-color="#4e4c4c"/></linearGradient>
<linearGradient id="r29" gradientUnits="userSpaceOnUse" x1="384.2" y1="0" x2="920.8" y2="0"><stop offset="0" stop-color="#9d9f9f"/><stop offset="0.008" stop-color="#9ea09f"/><stop offset="0.02" stop-color="#9ea09f"/><stop offset="0.04" stop-color="#9ea09f"/><stop offset="0.07" stop-color="#9ea09f"/><stop offset="0.12" stop-color="#9ea09f"/><stop offset="0.2" stop-color="#9ea09f"/><stop offset="0.3" stop-color="#9ea09f"/><stop offset="0.4" stop-color="#9d9f9f"/><stop offset="0.5" stop-color="#9d9f9e"/><stop offset="0.6" stop-color="#9b9d9c"/><stop offset="0.7" stop-color="#949695"/><stop offset="0.78" stop-color="#888a89"/><stop offset="0.85" stop-color="#7b7d7c"/><stop offset="0.9" stop-color="#707272"/><stop offset="0.94" stop-color="#676968"/><stop offset="0.97" stop-color="#5d5f5f"/><stop offset="0.985" stop-color="#585958"/><stop offset="1" stop-color="#4d4b4a"/></linearGradient>
<linearGradient id="r30" gradientUnits="userSpaceOnUse" x1="381.6" y1="0" x2="923.5" y2="0"><stop offset="0" stop-color="#9d9f9f"/><stop offset="0.008" stop-color="#9ea09f"/><stop offset="0.02" stop-color="#9ea09f"/><stop offset="0.04" stop-color="#9ea09f"/><stop offset="0.07" stop-color="#9ea09f"/><stop offset="0.12" stop-color="#9ea09f"/><stop offset="0.2" stop-color="#9ea09f"/><stop offset="0.3" stop-color="#9ea09f"/><stop offset="0.4" stop-color="#9d9f9f"/><stop offset="0.5" stop-color="#9d9f9e"/><stop offset="0.6" stop-color="#9b9d9c"/><stop offset="0.7" stop-color="#949695"/><stop offset="0.78" stop-color="#878989"/><stop offset="0.85" stop-color="#7a7c7c"/><stop offset="0.9" stop-color="#707271"/><stop offset="0.94" stop-color="#666867"/><stop offset="0.97" stop-color="#5d5e5e"/><stop offset="0.985" stop-color="#575857"/><stop offset="1" stop-color="#4c4a49"/></linearGradient>
<linearGradient id="r31" gradientUnits="userSpaceOnUse" x1="379.1" y1="0" x2="926.0" y2="0"><stop offset="0" stop-color="#9d9f9f"/><stop offset="0.008" stop-color="#9ea09f"/><stop offset="0.02" stop-color="#9ea09f"/><stop offset="0.04" stop-color="#9ea09f"/><stop offset="0.07" stop-color="#9ea09f"/><stop offset="0.12" stop-color="#9ea09f"/><stop offset="0.2" stop-color="#9ea09f"/><stop offset="0.3" stop-color="#9ea09f"/><stop offset="0.4" stop-color="#9d9f9f"/><stop offset="0.5" stop-color="#9d9f9e"/><stop offset="0.6" stop-color="#9b9d9c"/><stop offset="0.7" stop-color="#939595"/><stop offset="0.78" stop-color="#878988"/><stop offset="0.85" stop-color="#7a7c7b"/><stop offset="0.9" stop-color="#6f7171"/><stop offset="0.94" stop-color="#656766"/><stop offset="0.97" stop-color="#5c5d5d"/><stop offset="0.985" stop-color="#565756"/><stop offset="1" stop-color="#4b4949"/></linearGradient>
<linearGradient id="r32" gradientUnits="userSpaceOnUse" x1="376.8" y1="0" x2="928.4" y2="0"><stop offset="0" stop-color="#9d9f9f"/><stop offset="0.008" stop-color="#9ea09f"/><stop offset="0.02" stop-color="#9ea09f"/><stop offset="0.04" stop-color="#9ea09f"/><stop offset="0.07" stop-color="#9ea09f"/><stop offset="0.12" stop-color="#9ea09f"/><stop offset="0.2" stop-color="#9ea09f"/><stop offset="0.3" stop-color="#9ea09f"/><stop offset="0.4" stop-color="#9d9f9f"/><stop offset="0.5" stop-color="#9d9f9e"/><stop offset="0.6" stop-color="#9b9d9c"/><stop offset="0.7" stop-color="#939594"/><stop offset="0.78" stop-color="#868888"/><stop offset="0.85" stop-color="#797b7b"/><stop offset="0.9" stop-color="#6e7070"/><stop offset="0.94" stop-color="#646666"/><stop offset="0.97" stop-color="#5b5c5c"/><stop offset="0.985" stop-color="#555655"/><stop offset="1" stop-color="#4a4948"/></linearGradient>
<linearGradient id="r33" gradientUnits="userSpaceOnUse" x1="374.6" y1="0" x2="930.7" y2="0"><stop offset="0" stop-color="#9d9f9f"/><stop offset="0.008" stop-color="#9ea09f"/><stop offset="0.02" stop-color="#9ea09f"/><stop offset="0.04" stop-color="#9ea09f"/><stop offset="0.07" stop-color="#9ea09f"/><stop offset="0.12" stop-color="#9ea09f"/><stop offset="0.2" stop-color="#9ea09f"/><stop offset="0.3" stop-color="#9ea09f"/><stop offset="0.4" stop-color="#9d9f9f"/><stop offset="0.5" stop-color="#9d9f9e"/><stop offset="0.6" stop-color="#9a9c9c"/><stop offset="0.7" stop-color="#939594"/><stop offset="0.78" stop-color="#868887"/><stop offset="0.85" stop-color="#797b7a"/><stop offset="0.9" stop-color="#6e706f"/><stop offset="0.94" stop-color="#636565"/><stop offset="0.97" stop-color="#5a5b5b"/><stop offset="0.985" stop-color="#555554"/><stop offset="1" stop-color="#4a4847"/></linearGradient>
<linearGradient id="r34" gradientUnits="userSpaceOnUse" x1="372.5" y1="0" x2="932.8" y2="0"><stop offset="0" stop-color="#9d9f9f"/><stop offset="0.008" stop-color="#9ea09f"/><stop offset="0.02" stop-color="#9ea09f"/><stop offset="0.04" stop-color="#9ea09f"/><stop offset="0.07" stop-color="#9ea09f"/><stop offset="0.12" stop-color="#9ea09f"/><stop offset="0.2" stop-color="#9ea09f"/><stop offset="0.3" stop-color="#9ea09f"/><stop offset="0.4" stop-color="#9d9f9f"/><stop offset="0.5" stop-color="#9d9f9e"/><stop offset="0.6" stop-color="#9a9c9c"/><stop offset="0.7" stop-color="#929494"/><stop offset="0.78" stop-color="#858787"/><stop offset="0.85" stop-color="#787a79"/><stop offset="0.9" stop-color="#6d6f6e"/><stop offset="0.94" stop-color="#636564"/><stop offset="0.97" stop-color="#595a5a"/><stop offset="0.985" stop-color="#545453"/><stop offset="1" stop-color="#494746"/></linearGradient>
<linearGradient id="r35" gradientUnits="userSpaceOnUse" x1="370.6" y1="0" x2="934.8" y2="0"><stop offset="0" stop-color="#9d9f9f"/><stop offset="0.008" stop-color="#9ea09f"/><stop offset="0.02" stop-color="#9ea09f"/><stop offset="0.04" stop-color="#9ea09f"/><stop offset="0.07" stop-color="#9ea09f"/><stop offset="0.12" stop-color="#9ea09f"/><stop offset="0.2" stop-color="#9ea09f"/><stop offset="0.3" stop-color="#9ea09f"/><stop offset="0.4" stop-color="#9d9f9f"/><stop offset="0.5" stop-color="#9d9f9e"/><stop offset="0.6" stop-color="#9a9c9c"/><stop offset="0.7" stop-color="#929493"/><stop offset="0.78" stop-color="#858786"/><stop offset="0.85" stop-color="#777979"/><stop offset="0.9" stop-color="#6c6e6e"/><stop offset="0.94" stop-color="#626463"/><stop offset="0.97" stop-color="#595a59"/><stop offset="0.985" stop-color="#535352"/><stop offset="1" stop-color="#494746"/></linearGradient>
<linearGradient id="r36" gradientUnits="userSpaceOnUse" x1="368.9" y1="0" x2="936.6" y2="0"><stop offset="0" stop-color="#9d9f9f"/><stop offset="0.008" stop-color="#9ea09f"/><stop offset="0.02" stop-color="#9ea09f"/><stop offset="0.04" stop-color="#9ea09f"/><stop offset="0.07" stop-color="#9ea09f"/><stop offset="0.12" stop-color="#9ea09f"/><stop offset="0.2" stop-color="#9ea09f"/><stop offset="0.3" stop-color="#9ea09f"/><stop offset="0.4" stop-color="#9d9f9f"/><stop offset="0.5" stop-color="#9d9f9e"/><stop offset="0.6" stop-color="#9a9c9c"/><stop offset="0.7" stop-color="#919393"/><stop offset="0.78" stop-color="#848686"/><stop offset="0.85" stop-color="#777978"/><stop offset="0.9" stop-color="#6c6e6d"/><stop offset="0.94" stop-color="#616363"/><stop offset="0.97" stop-color="#585958"/><stop offset="0.985" stop-color="#525251"/><stop offset="1" stop-color="#484645"/></linearGradient>
<linearGradient id="r37" gradientUnits="userSpaceOnUse" x1="367.2" y1="0" x2="938.3" y2="0"><stop offset="0" stop-color="#9d9f9f"/><stop offset="0.008" stop-color="#9ea09f"/><stop offset="0.02" stop-color="#9ea09f"/><stop offset="0.04" stop-color="#9ea09f"/><stop offset="0.07" stop-color="#9ea09f"/><stop offset="0.12" stop-color="#9ea09f"/><stop offset="0.2" stop-color="#9ea09f"/><stop offset="0.3" stop-color="#9ea09f"/><stop offset="0.4" stop-color="#9d9f9f"/><stop offset="0.5" stop-color="#9d9f9e"/><stop offset="0.6" stop-color="#9a9c9c"/><stop offset="0.7" stop-color="#919392"/><stop offset="0.78" stop-color="#848685"/><stop offset="0.85" stop-color="#767878"/><stop offset="0.9" stop-color="#6b6d6c"/><stop offset="0.94" stop-color="#606262"/><stop offset="0.97" stop-color="#575857"/><stop offset="0.985" stop-color="#525150"/><stop offset="1" stop-color="#484645"/></linearGradient>
<linearGradient id="r38" gradientUnits="userSpaceOnUse" x1="365.8" y1="0" x2="939.9" y2="0"><stop offset="0" stop-color="#9d9f9f"/><stop offset="0.008" stop-color="#9ea09f"/><stop offset="0.02" stop-color="#9ea09f"/><stop offset="0.04" stop-color="#9ea09f"/><stop offset="0.07" stop-color="#9ea09f"/><stop offset="0.12" stop-color="#9ea09f"/><stop offset="0.2" stop-color="#9ea09f"/><stop offset="0.3" stop-color="#9ea09f"/><stop offset="0.4" stop-color="#9d9f9f"/><stop offset="0.5" stop-color="#9d9f9e"/><stop offset="0.6" stop-color="#9a9c9b"/><stop offset="0.7" stop-color="#909292"/><stop offset="0.78" stop-color="#838585"/><stop offset="0.85" stop-color="#757777"/><stop offset="0.9" stop-color="#6a6c6c"/><stop offset="0.94" stop-color="#606261"/><stop offset="0.97" stop-color="#575756"/><stop offset="0.985" stop-color="#51504f"/><stop offset="1" stop-color="#474544"/></linearGradient>
<linearGradient id="r39" gradientUnits="userSpaceOnUse" x1="364.4" y1="0" x2="941.3" y2="0"><stop offset="0" stop-color="#9d9f9f"/><stop offset="0.008" stop-color="#9ea09f"/><stop offset="0.02" stop-color="#9ea09f"/><stop offset="0.04" stop-color="#9ea09f"/><stop offset="0.07" stop-color="#9ea09f"/><stop offset="0.12" stop-color="#9ea09f"/><stop offset="0.2" stop-color="#9ea09f"/><stop offset="0.3" stop-color="#9ea09f"/><stop offset="0.4" stop-color="#9d9f9f"/><stop offset="0.5" stop-color="#9d9f9e"/><stop offset="0.6" stop-color="#9a9c9b"/><stop offset="0.7" stop-color="#909291"/><stop offset="0.78" stop-color="#838584"/><stop offset="0.85" stop-color="#757776"/><stop offset="0.9" stop-color="#6a6c6b"/><stop offset="0.94" stop-color="#5f6160"/><stop offset="0.97" stop-color="#565656"/><stop offset="0.985" stop-color="#504f4f"/><stop offset="1" stop-color="#474544"/></linearGradient>
<linearGradient id="r40" gradientUnits="userSpaceOnUse" x1="363.2" y1="0" x2="942.6" y2="0"><stop offset="0" stop-color="#9d9f9f"/><stop offset="0.008" stop-color="#9ea09f"/><stop offset="0.02" stop-color="#9ea09f"/><stop offset="0.04" stop-color="#9ea09f"/><stop offset="0.07" stop-color="#9ea09f"/><stop offset="0.12" stop-color="#9ea09f"/><stop offset="0.2" stop-color="#9ea09f"/><stop offset="0.3" stop-color="#9ea09f"/><stop offset="0.4" stop-color="#9d9f9f"/><stop offset="0.5" stop-color="#9c9e9e"/><stop offset="0.6" stop-color="#9a9c9b"/><stop offset="0.7" stop-color="#8f9191"/><stop offset="0.78" stop-color="#828483"/><stop offset="0.85" stop-color="#747676"/><stop offset="0.9" stop-color="#696b6a"/><stop offset="0.94" stop-color="#5e6060"/><stop offset="0.97" stop-color="#555555"/><stop offset="0.985" stop-color="#4f4e4e"/><stop offset="1" stop-color="#474443"/></linearGradient>
<linearGradient id="r41" gradientUnits="userSpaceOnUse" x1="362.0" y1="0" x2="943.8" y2="0"><stop offset="0" stop-color="#9d9f9f"/><stop offset="0.008" stop-color="#9ea09f"/><stop offset="0.02" stop-color="#9ea09f"/><stop offset="0.04" stop-color="#9ea09f"/><stop offset="0.07" stop-color="#9ea09f"/><stop offset="0.12" stop-color="#9ea09f"/><stop offset="0.2" stop-color="#9ea09f"/><stop offset="0.3" stop-color="#9ea09f"/><stop offset="0.4" stop-color="#9d9f9f"/><stop offset="0.5" stop-color="#9c9e9e"/><stop offset="0.6" stop-color="#999b9b"/><stop offset="0.7" stop-color="#8f9191"/><stop offset="0.78" stop-color="#818383"/><stop offset="0.85" stop-color="#747675"/><stop offset="0.9" stop-color="#686a6a"/><stop offset="0.94" stop-color="#5e5f5f"/><stop offset="0.97" stop-color="#555554"/><stop offset="0.985" stop-color="#4f4e4d"/><stop offset="1" stop-color="#474443"/></linearGradient>
<linearGradient id="r42" gradientUnits="userSpaceOnUse" x1="361.1" y1="0" x2="944.8" y2="0"><stop offset="0" stop-color="#9d9f9f"/><stop offset="0.008" stop-color="#9ea09f"/><stop offset="0.02" stop-color="#9ea09f"/><stop offset="0.04" stop-color="#9ea09f"/><stop offset="0.07" stop-color="#9ea09f"/><stop offset="0.12" stop-color="#9ea09f"/><stop offset="0.2" stop-color="#9ea09f"/><stop offset="0.3" stop-color="#9ea09f"/><stop offset="0.4" stop-color="#9d9f9f"/><stop offset="0.5" stop-color="#9c9e9e"/><stop offset="0.6" stop-color="#999b9b"/><stop offset="0.7" stop-color="#8f9190"/><stop offset="0.78" stop-color="#818382"/><stop offset="0.85" stop-color="#737575"/><stop offset="0.9" stop-color="#686a69"/><stop offset="0.94" stop-color="#5d5f5e"/><stop offset="0.97" stop-color="#545453"/><stop offset="0.985" stop-color="#4e4d4c"/><stop offset="1" stop-color="#464443"/></linearGradient>
<linearGradient id="r43" gradientUnits="userSpaceOnUse" x1="360.2" y1="0" x2="945.7" y2="0"><stop offset="0" stop-color="#9d9f9f"/><stop offset="0.008" stop-color="#9ea09f"/><stop offset="0.02" stop-color="#9ea09f"/><stop offset="0.04" stop-color="#9ea09f"/><stop offset="0.07" stop-color="#9ea09f"/><stop offset="0.12" stop-color="#9ea09f"/><stop offset="0.2" stop-color="#9ea09f"/><stop offset="0.3" stop-color="#9ea09f"/><stop offset="0.4" stop-color="#9d9f9f"/><stop offset="0.5" stop-color="#9c9e9e"/><stop offset="0.6" stop-color="#999b9b"/><stop offset="0.7" stop-color="#8e9090"/><stop offset="0.78" stop-color="#808282"/><stop offset="0.85" stop-color="#737574"/><stop offset="0.9" stop-color="#676969"/><stop offset="0.94" stop-color="#5c5e5d"/><stop offset="0.97" stop-color="#535352"/><stop offset="0.985" stop-color="#4d4c4b"/><stop offset="1" stop-color="#464343"/></linearGradient>
<linearGradient id="r44" gradientUnits="userSpaceOnUse" x1="359.5" y1="0" x2="946.5" y2="0"><stop offset="0" stop-color="#9d9f9f"/><stop offset="0.008" stop-color="#9ea09f"/><stop offset="0.02" stop-color="#9ea09f"/><stop offset="0.04" stop-color="#9ea09f"/><stop offset="0.07" stop-color="#9ea09f"/><stop offset="0.12" stop-color="#9ea09f"/><stop offset="0.2" stop-color="#9ea09f"/><stop offset="0.3" stop-color="#9ea09f"/><stop offset="0.4" stop-color="#9d9f9f"/><stop offset="0.5" stop-color="#9c9e9e"/><stop offset="0.6" stop-color="#999b9a"/><stop offset="0.7" stop-color="#8d8f8f"/><stop offset="0.78" stop-color="#808281"/><stop offset="0.85" stop-color="#727473"/><stop offset="0.9" stop-color="#666868"/><stop offset="0.94" stop-color="#5c5d5d"/><stop offset="0.97" stop-color="#535252"/><stop offset="0.985" stop-color="#4d4b4b"/><stop offset="1" stop-color="#464342"/></linearGradient>
<linearGradient id="r45" gradientUnits="userSpaceOnUse" x1="358.9" y1="0" x2="947.2" y2="0"><stop offset="0" stop-color="#9d9f9f"/><stop offset="0.008" stop-color="#9ea09f"/><stop offset="0.02" stop-color="#9ea09f"/><stop offset="0.04" stop-color="#9ea09f"/><stop offset="0.07" stop-color="#9ea09f"/><stop offset="0.12" stop-color="#9ea09f"/><stop offset="0.2" stop-color="#9ea09f"/><stop offset="0.3" stop-color="#9ea09f"/><stop offset="0.4" stop-color="#9d9f9f"/><stop offset="0.5" stop-color="#9c9e9e"/><stop offset="0.6" stop-color="#999b9a"/><stop offset="0.7" stop-color="#8d8f8e"/><stop offset="0.78" stop-color="#7f8181"/><stop offset="0.85" stop-color="#717373"/><stop offset="0.9" stop-color="#666867"/><stop offset="0.94" stop-color="#5b5d5c"/><stop offset="0.97" stop-color="#525251"/><stop offset="0.985" stop-color="#4c4b4a"/><stop offset="1" stop-color="#464342"/></linearGradient>
<linearGradient id="r46" gradientUnits="userSpaceOnUse" x1="358.4" y1="0" x2="947.8" y2="0"><stop offset="0" stop-color="#9d9f9f"/><stop offset="0.008" stop-color="#9ea09f"/><stop offset="0.02" stop-color="#9ea09f"/><stop offset="0.04" stop-color="#9ea09f"/><stop offset="0.07" stop-color="#9ea09f"/><stop offset="0.12" stop-color="#9ea09f"/><stop offset="0.2" stop-color="#9ea09f"/><stop offset="0.3" stop-color="#9ea09f"/><stop offset="0.4" stop-color="#9d9f9f"/><stop offset="0.5" stop-color="#9c9e9e"/><stop offset="0.6" stop-color="#989a9a"/><stop offset="0.7" stop-color="#8c8e8e"/><stop offset="0.78" stop-color="#7f8180"/><stop offset="0.85" stop-color="#717372"/><stop offset="0.9" stop-color="#656767"/><stop offset="0.94" stop-color="#5b5c5b"/><stop offset="0.97" stop-color="#525150"/><stop offset="0.985" stop-color="#4c4a49"/><stop offset="1" stop-color="#464342"/></linearGradient>
<linearGradient id="r47" gradientUnits="userSpaceOnUse" x1="358.0" y1="0" x2="948.2" y2="0"><stop offset="0" stop-color="#9d9f9f"/><stop offset="0.008" stop-color="#9ea09f"/><stop offset="0.02" stop-color="#9ea09f"/><stop offset="0.04" stop-color="#9ea09f"/><stop offset="0.07" stop-color="#9ea09f"/><stop offset="0.12" stop-color="#9ea09f"/><stop offset="0.2" stop-color="#9ea09f"/><stop offset="0.3" stop-color="#9ea09f"/><stop offset="0.4" stop-color="#9d9f9f"/><stop offset="0.5" stop-color="#9c9e9e"/><stop offset="0.6" stop-color="#989a9a"/><stop offset="0.7" stop-color="#8c8e8d"/><stop offset="0.78" stop-color="#7e8080"/><stop offset="0.85" stop-color="#707272"/><stop offset="0.9" stop-color="#656766"/><stop offset="0.94" stop-color="#5a5b5b"/><stop offset="0.97" stop-color="#515050"/><stop offset="0.985" stop-color="#4b4a49"/><stop offset="1" stop-color="#454342"/></linearGradient>
<linearGradient id="r48" gradientUnits="userSpaceOnUse" x1="357.8" y1="0" x2="948.5" y2="0"><stop offset="0" stop-color="#9d9f9e"/><stop offset="0.008" stop-color="#9d9f9f"/><stop offset="0.02" stop-color="#9ea09f"/><stop offset="0.04" stop-color="#9ea09f"/><stop offset="0.07" stop-color="#9ea09f"/><stop offset="0.12" stop-color="#9ea09f"/><stop offset="0.2" stop-color="#9ea09f"/><stop offset="0.3" stop-color="#9ea09f"/><stop offset="0.4" stop-color="#9d9f9f"/><stop offset="0.5" stop-color="#9c9e9d"/><stop offset="0.6" stop-color="#989a99"/><stop offset="0.7" stop-color="#8b8d8d"/><stop offset="0.78" stop-color="#7e807f"/><stop offset="0.85" stop-color="#707271"/><stop offset="0.9" stop-color="#646666"/><stop offset="0.94" stop-color="#5a5b5a"/><stop offset="0.97" stop-color="#50504f"/><stop offset="0.985" stop-color="#4b4948"/><stop offset="1" stop-color="#454241"/></linearGradient>
<linearGradient id="r49" gradientUnits="userSpaceOnUse" x1="357.6" y1="0" x2="948.7" y2="0"><stop offset="0" stop-color="#9d9f9e"/><stop offset="0.008" stop-color="#9d9f9f"/><stop offset="0.02" stop-color="#9ea09f"/><stop offset="0.04" stop-color="#9ea09f"/><stop offset="0.07" stop-color="#9ea09f"/><stop offset="0.12" stop-color="#9ea09f"/><stop offset="0.2" stop-color="#9ea09f"/><stop offset="0.3" stop-color="#9ea09f"/><stop offset="0.4" stop-color="#9d9f9f"/><stop offset="0.5" stop-color="#9c9e9d"/><stop offset="0.6" stop-color="#989a99"/><stop offset="0.7" stop-color="#8b8d8c"/><stop offset="0.78" stop-color="#7d7f7e"/><stop offset="0.85" stop-color="#6f7171"/><stop offset="0.9" stop-color="#636565"/><stop offset="0.94" stop-color="#595a59"/><stop offset="0.97" stop-color="#504f4e"/><stop offset="0.985" stop-color="#4b4948"/><stop offset="1" stop-color="#454241"/></linearGradient>
<linearGradient id="r50" gradientUnits="userSpaceOnUse" x1="357.6" y1="0" x2="948.8" y2="0"><stop offset="0" stop-color="#9d9f9e"/><stop offset="0.008" stop-color="#9d9f9f"/><stop offset="0.02" stop-color="#9ea09f"/><stop offset="0.04" stop-color="#9ea09f"/><stop offset="0.07" stop-color="#9ea09f"/><stop offset="0.12" stop-color="#9ea09f"/><stop offset="0.2" stop-color="#9ea09f"/><stop offset="0.3" stop-color="#9ea09f"/><stop offset="0.4" stop-color="#9d9f9f"/><stop offset="0.5" stop-color="#9c9e9d"/><stop offset="0.6" stop-color="#979999"/><stop offset="0.7" stop-color="#8a8c8c"/><stop offset="0.78" stop-color="#7c7e7e"/><stop offset="0.85" stop-color="#6e7070"/><stop offset="0.9" stop-color="#636564"/><stop offset="0.94" stop-color="#595959"/><stop offset="0.97" stop-color="#4f4f4e"/><stop offset="0.985" stop-color="#4a4847"/><stop offset="1" stop-color="#454241"/></linearGradient>
<linearGradient id="r51" gradientUnits="userSpaceOnUse" x1="357.7" y1="0" x2="948.7" y2="0"><stop offset="0" stop-color="#9d9f9e"/><stop offset="0.008" stop-color="#9d9f9f"/><stop offset="0.02" stop-color="#9ea09f"/><stop offset="0.04" stop-color="#9ea09f"/><stop offset="0.07" stop-color="#9ea09f"/><stop offset="0.12" stop-color="#9ea09f"/><stop offset="0.2" stop-color="#9ea09f"/><stop offset="0.3" stop-color="#9ea09f"/><stop offset="0.4" stop-color="#9d9f9f"/><stop offset="0.5" stop-color="#9c9e9d"/><stop offset="0.6" stop-color="#979999"/><stop offset="0.7" stop-color="#8a8c8b"/><stop offset="0.78" stop-color="#7c7e7d"/><stop offset="0.85" stop-color="#6e706f"/><stop offset="0.9" stop-color="#626464"/><stop offset="0.94" stop-color="#585958"/><stop offset="0.97" stop-color="#4f4e4d"/><stop offset="0.985" stop-color="#4a4847"/><stop offset="1" stop-color="#454241"/></linearGradient>
<linearGradient id="r52" gradientUnits="userSpaceOnUse" x1="358.0" y1="0" x2="948.6" y2="0"><stop offset="0" stop-color="#9d9f9e"/><stop offset="0.008" stop-color="#9d9f9f"/><stop offset="0.02" stop-color="#9ea09f"/><stop offset="0.04" stop-color="#9ea09f"/><stop offset="0.07" stop-color="#9ea09f"/><stop offset="0.12" stop-color="#9ea09f"/><stop offset="0.2" stop-color="#9ea09f"/><stop offset="0.3" stop-color="#9d9f9f"/><stop offset="0.4" stop-color="#9d9f9e"/><stop offset="0.5" stop-color="#9b9d9d"/><stop offset="0.6" stop-color="#979998"/><stop offset="0.7" stop-color="#898b8b"/><stop offset="0.78" stop-color="#7b7d7d"/><stop offset="0.85" stop-color="#6d6f6f"/><stop offset="0.9" stop-color="#626463"/><stop offset="0.94" stop-color="#585858"/><stop offset="0.97" stop-color="#4e4d4d"/><stop offset="0.985" stop-color="#4a4847"/><stop offset="1" stop-color="#454241"/></linearGradient>
<linearGradient id="r53" gradientUnits="userSpaceOnUse" x1="358.3" y1="0" x2="948.3" y2="0"><stop offset="0" stop-color="#9d9f9e"/><stop offset="0.008" stop-color="#9d9f9f"/><stop offset="0.02" stop-color="#9ea09f"/><stop offset="0.04" stop-color="#9ea09f"/><stop offset="0.07" stop-color="#9ea09f"/><stop offset="0.12" stop-color="#9ea09f"/><stop offset="0.2" stop-color="#9ea09f"/><stop offset="0.3" stop-color="#9d9f9f"/><stop offset="0.4" stop-color="#9d9f9e"/><stop offset="0.5" stop-color="#9b9d9d"/><stop offset="0.6" stop-color="#969898"/><stop offset="0.7" stop-color="#888a8a"/><stop offset="0.78" stop-color="#7b7d7c"/><stop offset="0.85" stop-color="#6d6f6e"/><stop offset="0.9" stop-color="#616363"/><stop offset="0.94" stop-color="#575857"/><stop offset="0.97" stop-color="#4e4d4c"/><stop offset="0.985" stop-color="#494746"/><stop offset="1" stop-color="#454241"/></linearGradient>
<linearGradient id="r54" gradientUnits="userSpaceOnUse" x1="358.8" y1="0" x2="947.9" y2="0"><stop offset="0" stop-color="#9d9f9e"/><stop offset="0.008" stop-color="#9d9f9f"/><stop offset="0.02" stop-color="#9d9f9f"/><stop offset="0.04" stop-color="#9ea09f"/><stop offset="0.07" stop-color="#9ea09f"/><stop offset="0.12" stop-color="#9ea09f"/><stop offset="0.2" stop-color="#9ea09f"/><stop offset="0.3" stop-color="#9d9f9f"/><stop offset="0.4" stop-color="#9d9f9e"/><stop offset="0.5" stop-color="#9b9d9d"/><stop offset="0.6" stop-color="#969897"/><stop offset="0.7" stop-color="#888a89"/><stop offset="0.78" stop-color="#7a7c7c"/><stop offset="0.85" stop-color="#6c6e6e"/><stop offset="0.9" stop-color="#616362"/><stop offset="0.94" stop-color="#575756"/><stop offset="0.97" stop-color="#4d4c4b"/><stop offset="0.985" stop-color="#494746"/><stop offset="1" stop-color="#454241"/></linearGradient>
<linearGradient id="r55" gradientUnits="userSpaceOnUse" x1="359.4" y1="0" x2="947.3" y2="0"><stop offset="0" stop-color="#9d9f9e"/><stop offset="0.008" stop-color="#9d9f9f"/><stop offset="0.02" stop-color="#9d9f9f"/><stop offset="0.04" stop-color="#9ea09f"/><stop offset="0.07" stop-color="#9ea09f"/><stop offset="0.12" stop-color="#9ea09f"/><stop offset="0.2" stop-color="#9ea09f"/><stop offset="0.3" stop-color="#9d9f9f"/><stop offset="0.4" stop-color="#9d9f9e"/><stop offset="0.5" stop-color="#9b9d9d"/><stop offset="0.6" stop-color="#959797"/><stop offset="0.7" stop-color="#878989"/><stop offset="0.78" stop-color="#797b7b"/><stop offset="0.85" stop-color="#6c6e6d"/><stop offset="0.9" stop-color="#606262"/><stop offset="0.94" stop-color="#565756"/><stop offset="0.97" stop-color="#4d4c4b"/><stop offset="0.985" stop-color="#494746"/><stop offset="1" stop-color="#444241"/></linearGradient>
<linearGradient id="r56" gradientUnits="userSpaceOnUse" x1="360.1" y1="0" x2="946.7" y2="0"><stop offset="0" stop-color="#9c9e9e"/><stop offset="0.008" stop-color="#9d9f9f"/><stop offset="0.02" stop-color="#9d9f9f"/><stop offset="0.04" stop-color="#9ea09f"/><stop offset="0.07" stop-color="#9ea09f"/><stop offset="0.12" stop-color="#9ea09f"/><stop offset="0.2" stop-color="#9ea09f"/><stop offset="0.3" stop-color="#9d9f9f"/><stop offset="0.4" stop-color="#9d9f9e"/><stop offset="0.5" stop-color="#9b9d9c"/><stop offset="0.6" stop-color="#959796"/><stop offset="0.7" stop-color="#878988"/><stop offset="0.78" stop-color="#797b7a"/><stop offset="0.85" stop-color="#6b6d6d"/><stop offset="0.9" stop-color="#606261"/><stop offset="0.94" stop-color="#565655"/><stop offset="0.97" stop-color="#4d4b4a"/><stop offset="0.985" stop-color="#484645"/><stop offset="1" stop-color="#444140"/></linearGradient>
<linearGradient id="r57" gradientUnits="userSpaceOnUse" x1="361.0" y1="0" x2="945.9" y2="0"><stop offset="0" stop-color="#9c9e9e"/><stop offset="0.008" stop-color="#9d9f9f"/><stop offset="0.02" stop-color="#9d9f9f"/><stop offset="0.04" stop-color="#9ea09f"/><stop offset="0.07" stop-color="#9ea09f"/><stop offset="0.12" stop-color="#9ea09f"/><stop offset="0.2" stop-color="#9ea09f"/><stop offset="0.3" stop-color="#9d9f9f"/><stop offset="0.4" stop-color="#9d9f9e"/><stop offset="0.5" stop-color="#9b9d9c"/><stop offset="0.6" stop-color="#949696"/><stop offset="0.7" stop-color="#868887"/><stop offset="0.78" stop-color="#787a7a"/><stop offset="0.85" stop-color="#6a6c6c"/><stop offset="0.9" stop-color="#5f6161"/><stop offset="0.94" stop-color="#555555"/><stop offset="0.97" stop-color="#4c4b4a"/><stop offset="0.985" stop-color="#484645"/><stop offset="1" stop-color="#444140"/></linearGradient>
<linearGradient id="r58" gradientUnits="userSpaceOnUse" x1="361.9" y1="0" x2="945.0" y2="0"><stop offset="0" stop-color="#9c9e9e"/><stop offset="0.008" stop-color="#9d9f9f"/><stop offset="0.02" stop-color="#9d9f9f"/><stop offset="0.04" stop-color="#9d9f9f"/><stop offset="0.07" stop-color="#9ea09f"/><stop offset="0.12" stop-color="#9ea09f"/><stop offset="0.2" stop-color="#9ea09f"/><stop offset="0.3" stop-color="#9d9f9f"/><stop offset="0.4" stop-color="#9d9f9e"/><stop offset="0.5" stop-color="#9a9c9c"/><stop offset="0.6" stop-color="#949695"/><stop offset="0.7" stop-color="#858787"/><stop offset="0.78" stop-color="#787a79"/><stop offset="0.85" stop-color="#6a6c6b"/><stop offset="0.9" stop-color="#5f6060"/><stop offset="0.94" stop-color="#555554"/><stop offset="0.97" stop-color="#4c4a4a"/><stop offset="0.985" stop-color="#484645"/><stop offset="1" stop-color="#444140"/></linearGradient>
<linearGradient id="r59" gradientUnits="userSpaceOnUse" x1="363.0" y1="0" x2="944.0" y2="0"><stop offset="0" stop-color="#9c9e9e"/><stop offset="0.008" stop-color="#9d9f9f"/><stop offset="0.02" stop-color="#9d9f9f"/><stop offset="0.04" stop-color="#9d9f9f"/><stop offset="0.07" stop-color="#9ea09f"/><stop offset="0.12" stop-color="#9ea09f"/><stop offset="0.2" stop-color="#9ea09f"/><stop offset="0.3" stop-color="#9d9f9f"/><stop offset="0.4" stop-color="#9c9e9e"/><stop offset="0.5" stop-color="#9a9c9c"/><stop offset="0.6" stop-color="#939595"/><stop offset="0.7" stop-color="#858786"/><stop offset="0.78" stop-color="#777979"/><stop offset="0.85" stop-color="#696b6b"/><stop offset="0.9" stop-color="#5e605f"/><stop offset="0.94" stop-color="#545454"/><stop offset="0.97" stop-color="#4c4a49"/><stop offset="0.985" stop-color="#484645"/><stop offset="1" stop-color="#444140"/></linearGradient>
<linearGradient id="r60" gradientUnits="userSpaceOnUse" x1="364.2" y1="0" x2="942.9" y2="0"><stop offset="0" stop-color="#9c9e9e"/><stop offset="0.008" stop-color="#9d9f9e"/><stop offset="0.02" stop-color="#9d9f9f"/><stop offset="0.04" stop-color="#9d9f9f"/><stop offset="0.07" stop-color="#9ea09f"/><stop offset="0.12" stop-color="#9ea09f"/><stop offset="0.2" stop-color="#9d9f9f"/><stop offset="0.3" stop-color="#9d9f9f"/><stop offset="0.4" stop-color="#9c9e9e"/><stop offset="0.5" stop-color="#9a9c9b"/><stop offset="0.6" stop-color="#939594"/><stop offset="0.7" stop-color="#848686"/><stop offset="0.78" stop-color="#767878"/><stop offset="0.85" stop-color="#696b6a"/><stop offset="0.9" stop-color="#5e5f5f"/><stop offset="0.94" stop-color="#545453"/><stop offset="0.97" stop-color="#4b4a49"/><stop offset="0.985" stop-color="#484544"/><stop offset="1" stop-color="#444140"/></linearGradient>
<linearGradient id="r61" gradientUnits="userSpaceOnUse" x1="365.6" y1="0" x2="941.6" y2="0"><stop offset="0" stop-color="#9c9e9d"/><stop offset="0.008" stop-color="#9d9f9e"/><stop offset="0.02" stop-color="#9d9f9f"/><stop offset="0.04" stop-color="#9d9f9f"/><stop offset="0.07" stop-color="#9d9f9f"/><stop offset="0.12" stop-color="#9ea09f"/><stop offset="0.2" stop-color="#9d9f9f"/><stop offset="0.3" stop-color="#9d9f9f"/><stop offset="0.4" stop-color="#9c9e9e"/><stop offset="0.5" stop-color="#9a9c9b"/><stop offset="0.6" stop-color="#929493"/><stop offset="0.7" stop-color="#838585"/><stop offset="0.78" stop-color="#767877"/><stop offset="0.85" stop-color="#686a6a"/><stop offset="0.9" stop-color="#5d5f5e"/><stop offset="0.94" stop-color="#545353"/><stop offset="0.97" stop-color="#4b4948"/><stop offset="0.985" stop-color="#484544"/><stop offset="1" stop-color="#444140"/></linearGradient>
<linearGradient id="r62" gradientUnits="userSpaceOnUse" x1="367.0" y1="0" x2="940.2" y2="0"><stop offset="0" stop-color="#9c9e9d"/><stop offset="0.008" stop-color="#9d9f9e"/><stop offset="0.02" stop-color="#9d9f9f"/><stop offset="0.04" stop-color="#9d9f9f"/><stop offset="0.07" stop-color="#9d9f9f"/><stop offset="0.12" stop-color="#9d9f9f"/><stop offset="0.2" stop-color="#9d9f9f"/><stop offset="0.3" stop-color="#9d9f9f"/><stop offset="0.4" stop-color="#9c9e9e"/><stop offset="0.5" stop-color="#999b9b"/><stop offset="0.6" stop-color="#919393"/><stop offset="0.7" stop-color="#838584"/><stop offset="0.78" stop-color="#757777"/><stop offset="0.85" stop-color="#686a69"/><stop offset="0.9" stop-color="#5d5e5e"/><stop offset="0.94" stop-color="#535352"/><stop offset="0.97" stop-color="#4b4948"/><stop offset="0.985" stop-color="#474544"/><stop offset="1" stop-color="#444140"/></linearGradient>
<linearGradient id="r63" gradientUnits="userSpaceOnUse" x1="368.7" y1="0" x2="938.6" y2="0"><stop offset="0" stop-color="#9c9e9d"/><stop offset="0.008" stop-color="#9d9f9e"/><stop offset="0.02" stop-color="#9d9f9f"/><stop offset="0.04" stop-color="#9d9f9f"/><stop offset="0.07" stop-color="#9d9f9f"/><stop offset="0.12" stop-color="#9d9f9f"/><stop offset="0.2" stop-color="#9d9f9f"/><stop offset="0.3" stop-color="#9d9f9e"/><stop offset="0.4" stop-color="#9c9e9d"/><stop offset="0.5" stop-color="#999b9b"/><stop offset="0.6" stop-color="#909292"/><stop offset="0.7" stop-color="#828483"/><stop offset="0.78" stop-color="#757776"/><stop offset="0.85" stop-color="#676969"/><stop offset="0.9" stop-color="#5c5e5d"/><stop offset="0.94" stop-color="#535352"/><stop offset="0.97" stop-color="#4b4948"/><stop offset="0.985" stop-color="#474544"/><stop offset="1" stop-color="#444140"/></linearGradient>
<linearGradient id="r64" gradientUnits="userSpaceOnUse" x1="370.4" y1="0" x2="937.0" y2="0"><stop offset="0" stop-color="#9b9d9d"/><stop offset="0.008" stop-color="#9d9f9e"/><stop offset="0.02" stop-color="#9d9f9e"/><stop offset="0.04" stop-color="#9d9f9f"/><stop offset="0.07" stop-color="#9d9f9f"/><stop offset="0.12" stop-color="#9d9f9f"/><stop offset="0.2" stop-color="#9d9f9f"/><stop offset="0.3" stop-color="#9d9f9e"/><stop offset="0.4" stop-color="#9c9e9d"/><stop offset="0.5" stop-color="#999b9a"/><stop offset="0.6" stop-color="#909291"/><stop offset="0.7" stop-color="#818383"/><stop offset="0.78" stop-color="#747676"/><stop offset="0.85" stop-color="#676968"/><stop offset="0.9" stop-color="#5c5d5d"/><stop offset="0.94" stop-color="#525251"/><stop offset="0.97" stop-color="#4a4848"/><stop offset="0.985" stop-color="#474544"/><stop offset="1" stop-color="#444140"/></linearGradient>
<linearGradient id="r65" gradientUnits="userSpaceOnUse" x1="372.3" y1="0" x2="935.1" y2="0"><stop offset="0" stop-color="#9b9d9d"/><stop offset="0.008" stop-color="#9c9e9e"/><stop offset="0.02" stop-color="#9d9f9e"/><stop offset="0.04" stop-color="#9d9f9f"/><stop offset="0.07" stop-color="#9d9f9f"/><stop offset="0.12" stop-color="#9d9f9f"/><stop offset="0.2" stop-color="#9d9f9f"/><stop offset="0.3" stop-color="#9d9f9e"/><stop offset="0.4" stop-color="#9c9e9d"/><stop offset="0.5" stop-color="#989a9a"/><stop offset="0.6" stop-color="#8f9190"/><stop offset="0.7" stop-color="#808282"/><stop offset="0.78" stop-color="#737575"/><stop offset="0.85" stop-color="#666868"/><stop offset="0.9" stop-color="#5b5d5c"/><stop offset="0.94" stop-color="#525251"/><stop offset="0.97" stop-color="#4a4847"/><stop offset="0.985" stop-color="#474544"/><stop offset="1" stop-color="#444140"/></linearGradient>
<linearGradient id="r66" gradientUnits="userSpaceOnUse" x1="374.3" y1="0" x2="933.2" y2="0"><stop offset="0" stop-color="#9b9d9c"/><stop offset="0.008" stop-color="#9c9e9e"/><stop offset="0.02" stop-color="#9d9f9e"/><stop offset="0.04" stop-color="#9d9f9f"/><stop offset="0.07" stop-color="#9d9f9f"/><stop offset="0.12" stop-color="#9d9f9f"/><stop offset="0.2" stop-color="#9d9f9f"/><stop offset="0.3" stop-color="#9d9f9e"/><stop offset="0.4" stop-color="#9b9d9d"/><stop offset="0.5" stop-color="#989a99"/><stop offset="0.6" stop-color="#8e908f"/><stop offset="0.7" stop-color="#808281"/><stop offset="0.78" stop-color="#727474"/><stop offset="0.85" stop-color="#656767"/><stop offset="0.9" stop-color="#5b5c5b"/><stop offset="0.94" stop-color="#515150"/><stop offset="0.97" stop-color="#4a4847"/><stop offset="0.985" stop-color="#474443"/><stop offset="1" stop-color="#444140"/></linearGradient>
<linearGradient id="r67" gradientUnits="userSpaceOnUse" x1="376.4" y1="0" x2="931.1" y2="0"><stop offset="0" stop-color="#9a9c9c"/><stop offset="0.008" stop-color="#9c9e9e"/><stop offset="0.02" stop-color="#9d9f9e"/><stop offset="0.04" stop-color="#9d9f9e"/><stop offset="0.07" stop-color="#9d9f9f"/><stop offset="0.12" stop-color="#9d9f9f"/><stop offset="0.2" stop-color="#9d9f9f"/><stop offset="0.3" stop-color="#9c9e9e"/><stop offset="0.4" stop-color="#9b9d9c"/><stop offset="0.5" stop-color="#979999"/><stop offset="0.6" stop-color="#8d8f8e"/><stop offset="0.7" stop-color="#7f8180"/><stop offset="0.78" stop-color="#727473"/><stop offset="0.85" stop-color="#646666"/><stop offset="0.9" stop-color="#5a5b5b"/><stop offset="0.94" stop-color="#515050"/><stop offset="0.97" stop-color="#494747"/><stop offset="0.985" stop-color="#474443"/><stop offset="1" stop-color="#444140"/></linearGradient>
<linearGradient id="r68" gradientUnits="userSpaceOnUse" x1="378.7" y1="0" x2="928.9" y2="0"><stop offset="0" stop-color="#9a9c9c"/><stop offset="0.008" stop-color="#9c9e9d"/><stop offset="0.02" stop-color="#9c9e9e"/><stop offset="0.04" stop-color="#9d9f9e"/><stop offset="0.07" stop-color="#9d9f9e"/><stop offset="0.12" stop-color="#9d9f9f"/><stop offset="0.2" stop-color="#9d9f9e"/><stop offset="0.3" stop-color="#9c9e9e"/><stop offset="0.4" stop-color="#9b9d9c"/><stop offset="0.5" stop-color="#969898"/><stop offset="0.6" stop-color="#8b8d8d"/><stop offset="0.7" stop-color="#7e807f"/><stop offset="0.78" stop-color="#717372"/><stop offset="0.85" stop-color="#646665"/><stop offset="0.9" stop-color="#5a5b5a"/><stop offset="0.94" stop-color="#50504f"/><stop offset="0.97" stop-color="#494746"/><stop offset="0.985" stop-color="#474443"/><stop offset="1" stop-color="#444140"/></linearGradient>
<linearGradient id="r69" gradientUnits="userSpaceOnUse" x1="381.2" y1="0" x2="926.5" y2="0"><stop offset="0" stop-color="#9a9c9b"/><stop offset="0.008" stop-color="#9c9e9d"/><stop offset="0.02" stop-color="#9c9e9e"/><stop offset="0.04" stop-color="#9d9f9e"/><stop offset="0.07" stop-color="#9d9f9e"/><stop offset="0.12" stop-color="#9d9f9e"/><stop offset="0.2" stop-color="#9d9f9e"/><stop offset="0.3" stop-color="#9c9e9e"/><stop offset="0.4" stop-color="#9a9c9c"/><stop offset="0.5" stop-color="#959797"/><stop offset="0.6" stop-color="#8a8c8c"/><stop offset="0.7" stop-color="#7d7f7e"/><stop offset="0.78" stop-color="#707271"/><stop offset="0.85" stop-color="#636564"/><stop offset="0.9" stop-color="#595a59"/><stop offset="0.94" stop-color="#504f4e"/><stop offset="0.97" stop-color="#494746"/><stop offset="0.985" stop-color="#464443"/><stop offset="1" stop-color="#444140"/></linearGradient>
<linearGradient id="r70" gradientUnits="userSpaceOnUse" x1="383.8" y1="0" x2="923.9" y2="0"><stop offset="0" stop-color="#999b9b"/><stop offset="0.008" stop-color="#9b9d9d"/><stop offset="0.02" stop-color="#9c9e9e"/><stop offset="0.04" stop-color="#9c9e9e"/><stop offset="0.07" stop-color="#9d9f9e"/><stop offset="0.12" stop-color="#9d9f9e"/><stop offset="0.2" stop-color="#9d9f9e"/><stop offset="0.3" stop-color="#9c9e9d"/><stop offset="0.4" stop-color="#9a9c9b"/><stop offset="0.5" stop-color="#959796"/><stop offset="0.6" stop-color="#898b8b"/><stop offset="0.7" stop-color="#7c7e7d"/><stop offset="0.78" stop-color="#6f7170"/><stop offset="0.85" stop-color="#626464"/><stop offset="0.9" stop-color="#585958"/><stop offset="0.94" stop-color="#4f4e4e"/><stop offset="0.97" stop-color="#494646"/><stop offset="0.985" stop-color="#464443"/><stop offset="1" stop-color="#444140"/></linearGradient>
<linearGradient id="r71" gradientUnits="userSpaceOnUse" x1="386.6" y1="0" x2="921.2" y2="0"><stop offset="0" stop-color="#999b9a"/><stop offset="0.008" stop-color="#9b9d9d"/><stop offset="0.02" stop-color="#9c9e9d"/><stop offset="0.04" stop-color="#9c9e9e"/><stop offset="0.07" stop-color="#9d9f9e"/><stop offset="0.12" stop-color="#9d9f9e"/><stop offset="0.2" stop-color="#9c9e9e"/><stop offset="0.3" stop-color="#9c9e9d"/><stop offset="0.4" stop-color="#999b9b"/><stop offset="0.5" stop-color="#939595"/><stop offset="0.6" stop-color="#888a8a"/><stop offset="0.7" stop-color="#7b7d7c"/><stop offset="0.78" stop-color="#6e7070"/><stop offset="0.85" stop-color="#616363"/><stop offset="0.9" stop-color="#585858"/><stop offset="0.94" stop-color="#4f4e4d"/><stop offset="0.97" stop-color="#484645"/><stop offset="0.985" stop-color="#464343"/><stop offset="1" stop-color="#444140"/></linearGradient>
<linearGradient id="r72" gradientUnits="userSpaceOnUse" x1="389.5" y1="0" x2="918.4" y2="0"><stop offset="0" stop-color="#989a99"/><stop offset="0.008" stop-color="#9b9d9c"/><stop offset="0.02" stop-color="#9b9d9d"/><stop offset="0.04" stop-color="#9c9e9d"/><stop offset="0.07" stop-color="#9c9e9e"/><stop offset="0.12" stop-color="#9c9e9e"/><stop offset="0.2" stop-color="#9c9e9e"/><stop offset="0.3" stop-color="#9b9d9d"/><stop offset="0.4" stop-color="#999b9a"/><stop offset="0.5" stop-color="#929494"/><stop offset="0.6" stop-color="#878988"/><stop offset="0.7" stop-color="#797b7b"/><stop offset="0.78" stop-color="#6d6f6f"/><stop offset="0.85" stop-color="#616362"/><stop offset="0.9" stop-color="#575857"/><stop offset="0.94" stop-color="#4e4d4c"/><stop offset="0.97" stop-color="#484645"/><stop offset="0.985" stop-color="#464342"/><stop offset="1" stop-color="#444140"/></linearGradient>
<linearGradient id="r73" gradientUnits="userSpaceOnUse" x1="392.6" y1="0" x2="915.4" y2="0"><stop offset="0" stop-color="#979999"/><stop offset="0.008" stop-color="#9a9c9c"/><stop offset="0.02" stop-color="#9b9d9d"/><stop offset="0.04" stop-color="#9c9e9d"/><stop offset="0.07" stop-color="#9c9e9e"/><stop offset="0.12" stop-color="#9c9e9e"/><stop offset="0.2" stop-color="#9c9e9d"/><stop offset="0.3" stop-color="#9b9d9c"/><stop offset="0.4" stop-color="#989a9a"/><stop offset="0.5" stop-color="#919392"/><stop offset="0.6" stop-color="#868887"/><stop offset="0.7" stop-color="#787a7a"/><stop offset="0.78" stop-color="#6c6e6e"/><stop offset="0.85" stop-color="#606261"/><stop offset="0.9" stop-color="#575756"/><stop offset="0.94" stop-color="#4e4d4c"/><stop offset="0.97" stop-color="#484645"/><stop offset="0.985" stop-color="#464342"/><stop offset="1" stop-color="#444140"/></linearGradient>
<linearGradient id="r74" gradientUnits="userSpaceOnUse" x1="395.9" y1="0" x2="912.2" y2="0"><stop offset="0" stop-color="#969898"/><stop offset="0.008" stop-color="#9a9c9b"/><stop offset="0.02" stop-color="#9b9d9c"/><stop offset="0.04" stop-color="#9b9d9d"/><stop offset="0.07" stop-color="#9c9e9d"/><stop offset="0.12" stop-color="#9c9e9d"/><stop offset="0.2" stop-color="#9c9e9d"/><stop offset="0.3" stop-color="#9a9c9c"/><stop offset="0.4" stop-color="#979999"/><stop offset="0.5" stop-color="#909291"/><stop offset="0.6" stop-color="#848686"/><stop offset="0.7" stop-color="#777979"/><stop offset="0.78" stop-color="#6b6d6d"/><stop offset="0.85" stop-color="#5f6161"/><stop offset="0.9" stop-color="#565656"/><stop offset="0.94" stop-color="#4d4c4b"/><stop offset="0.97" stop-color="#484645"/><stop offset="0.985" stop-color="#464342"/><stop offset="1" stop-color="#444140"/></linearGradient>
<linearGradient id="r75" gradientUnits="userSpaceOnUse" x1="399.3" y1="0" x2="908.8" y2="0"><stop offset="0" stop-color="#959797"/><stop offset="0.008" stop-color="#999b9b"/><stop offset="0.02" stop-color="#9a9c9c"/><stop offset="0.04" stop-color="#9b9d9c"/><stop offset="0.07" stop-color="#9b9d9d"/><stop offset="0.12" stop-color="#9c9e9d"/><stop offset="0.2" stop-color="#9b9d9d"/><stop offset="0.3" stop-color="#9a9c9b"/><stop offset="0.4" stop-color="#969898"/><stop offset="0.5" stop-color="#8e9090"/><stop offset="0.6" stop-color="#838585"/><stop offset="0.7" stop-color="#767878"/><stop offset="0.78" stop-color="#6a6c6c"/><stop offset="0.85" stop-color="#5e6060"/><stop offset="0.9" stop-color="#555655"/><stop offset="0.94" stop-color="#4d4c4b"/><stop offset="0.97" stop-color="#484544"/><stop offset="0.985" stop-color="#464342"/><stop offset="1" stop-color="#444140"/></linearGradient>
<linearGradient id="r76" gradientUnits="userSpaceOnUse" x1="402.9" y1="0" x2="905.2" y2="0"><stop offset="0" stop-color="#949696"/><stop offset="0.008" stop-color="#989a9a"/><stop offset="0.02" stop-color="#9a9c9b"/><stop offset="0.04" stop-color="#9b9d9c"/><stop offset="0.07" stop-color="#9b9d9d"/><stop offset="0.12" stop-color="#9b9d9d"/><stop offset="0.2" stop-color="#9b9d9c"/><stop offset="0.3" stop-color="#999b9b"/><stop offset="0.4" stop-color="#959797"/><stop offset="0.5" stop-color="#8d8f8e"/><stop offset="0.6" stop-color="#828483"/><stop offset="0.7" stop-color="#757777"/><stop offset="0.78" stop-color="#696b6b"/><stop offset="0.85" stop-color="#5e605f"/><stop offset="0.9" stop-color="#555554"/><stop offset="0.94" stop-color="#4d4b4a"/><stop offset="0.97" stop-color="#484544"/><stop offset="0.985" stop-color="#464342"/><stop offset="1" stop-color="#444140"/></linearGradient>
<linearGradient id="r77" gradientUnits="userSpaceOnUse" x1="406.8" y1="0" x2="901.5" y2="0"><stop offset="0" stop-color="#939594"/><stop offset="0.008" stop-color="#979999"/><stop offset="0.02" stop-color="#999b9a"/><stop offset="0.04" stop-color="#9a9c9b"/><stop offset="0.07" stop-color="#9b9d9c"/><stop offset="0.12" stop-color="#9b9d9c"/><stop offset="0.2" stop-color="#9a9c9c"/><stop offset="0.3" stop-color="#999b9a"/><stop offset="0.4" stop-color="#949696"/><stop offset="0.5" stop-color="#8b8d8d"/><stop offset="0.6" stop-color="#818382"/><stop offset="0.7" stop-color="#747676"/><stop offset="0.78" stop-color="#696b6a"/><stop offset="0.85" stop-color="#5d5f5e"/><stop offset="0.9" stop-color="#545454"/><stop offset="0.94" stop-color="#4c4b4a"/><stop offset="0.97" stop-color="#474544"/><stop offset="0.985" stop-color="#464342"/><stop offset="1" stop-color="#444140"/></linearGradient>
<linearGradient id="r78" gradientUnits="userSpaceOnUse" x1="410.8" y1="0" x2="897.5" y2="0"><stop offset="0" stop-color="#919393"/><stop offset="0.008" stop-color="#969898"/><stop offset="0.02" stop-color="#989a9a"/><stop offset="0.04" stop-color="#999b9b"/><stop offset="0.07" stop-color="#9a9c9c"/><stop offset="0.12" stop-color="#9a9c9c"/><stop offset="0.2" stop-color="#9a9c9b"/><stop offset="0.3" stop-color="#989a99"/><stop offset="0.4" stop-color="#939594"/><stop offset="0.5" stop-color="#8a8c8b"/><stop offset="0.6" stop-color="#7f8181"/><stop offset="0.7" stop-color="#737574"/><stop offset="0.78" stop-color="#686a69"/><stop offset="0.85" stop-color="#5c5e5d"/><stop offset="0.9" stop-color="#545453"/><stop offset="0.94" stop-color="#4c4a4a"/><stop offset="0.97" stop-color="#474544"/><stop offset="0.985" stop-color="#464342"/><stop offset="1" stop-color="#444140"/></linearGradient>
<linearGradient id="r79" gradientUnits="userSpaceOnUse" x1="415.0" y1="0" x2="893.3" y2="0"><stop offset="0" stop-color="#8f9191"/><stop offset="0.008" stop-color="#959797"/><stop offset="0.02" stop-color="#979999"/><stop offset="0.04" stop-color="#999b9a"/><stop offset="0.07" stop-color="#999b9b"/><stop offset="0.12" stop-color="#9a9c9b"/><stop offset="0.2" stop-color="#999b9b"/><stop offset="0.3" stop-color="#979998"/><stop offset="0.4" stop-color="#919392"/><stop offset="0.5" stop-color="#888a8a"/><stop offset="0.6" stop-color="#7e807f"/><stop offset="0.7" stop-color="#727473"/><stop offset="0.78" stop-color="#676968"/><stop offset="0.85" stop-color="#5c5d5d"/><stop offset="0.9" stop-color="#535352"/><stop offset="0.94" stop-color="#4c4a49"/><stop offset="0.97" stop-color="#474544"/><stop offset="0.985" stop-color="#454342"/><stop offset="1" stop-color="#444140"/></linearGradient>
<linearGradient id="r80" gradientUnits="userSpaceOnUse" x1="419.5" y1="0" x2="888.9" y2="0"><stop offset="0" stop-color="#8e908f"/><stop offset="0.008" stop-color="#949695"/><stop offset="0.02" stop-color="#969898"/><stop offset="0.04" stop-color="#989a99"/><stop offset="0.07" stop-color="#999b9a"/><stop offset="0.12" stop-color="#999b9a"/><stop offset="0.2" stop-color="#989a9a"/><stop offset="0.3" stop-color="#959797"/><stop offset="0.4" stop-color="#8f9191"/><stop offset="0.5" stop-color="#878988"/><stop offset="0.6" stop-color="#7d7f7e"/><stop offset="0.7" stop-color="#717372"/><stop offset="0.78" stop-color="#666867"/><stop offset="0.85" stop-color="#5b5c5c"/><stop offset="0.9" stop-color="#535352"/><stop offset="0.94" stop-color="#4b4a49"/><stop offset="0.97" stop-color="#474544"/><stop offset="0.985" stop-color="#454342"/><stop offset="1" stop-color="#444140"/></linearGradient>
<linearGradient id="r81" gradientUnits="userSpaceOnUse" x1="424.2" y1="0" x2="884.2" y2="0"><stop offset="0" stop-color="#8c8e8d"/><stop offset="0.008" stop-color="#929494"/><stop offset="0.02" stop-color="#959796"/><stop offset="0.04" stop-color="#969898"/><stop offset="0.07" stop-color="#989a99"/><stop offset="0.12" stop-color="#989a99"/><stop offset="0.2" stop-color="#979999"/><stop offset="0.3" stop-color="#949695"/><stop offset="0.4" stop-color="#8d8f8f"/><stop offset="0.5" stop-color="#858787"/><stop offset="0.6" stop-color="#7b7d7d"/><stop offset="0.7" stop-color="#707271"/><stop offset="0.78" stop-color="#656766"/><stop offset="0.85" stop-color="#5a5c5b"/><stop offset="0.9" stop-color="#525251"/><stop offset="0.94" stop-color="#4b4949"/><stop offset="0.97" stop-color="#474544"/><stop offset="0.985" stop-color="#454342"/><stop offset="1" stop-color="#444140"/></linearGradient>
<linearGradient id="r82" gradientUnits="userSpaceOnUse" x1="429.2" y1="0" x2="879.3" y2="0"><stop offset="0" stop-color="#8a8c8c"/><stop offset="0.008" stop-color="#909292"/><stop offset="0.02" stop-color="#939594"/><stop offset="0.04" stop-color="#959797"/><stop offset="0.07" stop-color="#969898"/><stop offset="0.12" stop-color="#979998"/><stop offset="0.2" stop-color="#969897"/><stop offset="0.3" stop-color="#929494"/><stop offset="0.4" stop-color="#8c8e8d"/><stop offset="0.5" stop-color="#838585"/><stop offset="0.6" stop-color="#7a7c7b"/><stop offset="0.7" stop-color="#6e7070"/><stop offset="0.78" stop-color="#646665"/><stop offset="0.85" stop-color="#5a5b5a"/><stop offset="0.9" stop-color="#525151"/><stop offset="0.94" stop-color="#4b4948"/><stop offset="0.97" stop-color="#474444"/><stop offset="0.985" stop-color="#454342"/><stop offset="1" stop-color="#444140"/></linearGradient>
<linearGradient id="r83" gradientUnits="userSpaceOnUse" x1="434.5" y1="0" x2="874.2" y2="0"><stop offset="0" stop-color="#888a8a"/><stop offset="0.008" stop-color="#8e9090"/><stop offset="0.02" stop-color="#919392"/><stop offset="0.04" stop-color="#939595"/><stop offset="0.07" stop-color="#959796"/><stop offset="0.12" stop-color="#959797"/><stop offset="0.2" stop-color="#949696"/><stop offset="0.3" stop-color="#909292"/><stop offset="0.4" stop-color="#8a8c8b"/><stop offset="0.5" stop-color="#828483"/><stop offset="0.6" stop-color="#787a7a"/><stop offset="0.7" stop-color="#6d6f6f"/><stop offset="0.78" stop-color="#636564"/><stop offset="0.85" stop-color="#595a59"/><stop offset="0.9" stop-color="#515150"/><stop offset="0.94" stop-color="#4b4948"/><stop offset="0.97" stop-color="#474443"/><stop offset="0.985" stop-color="#454342"/><stop offset="1" stop-color="#444140"/></linearGradient>
<linearGradient id="r84" gradientUnits="userSpaceOnUse" x1="440.0" y1="0" x2="868.7" y2="0"><stop offset="0" stop-color="#868888"/><stop offset="0.008" stop-color="#8c8e8e"/><stop offset="0.02" stop-color="#8f9190"/><stop offset="0.04" stop-color="#919393"/><stop offset="0.07" stop-color="#939594"/><stop offset="0.12" stop-color="#949695"/><stop offset="0.2" stop-color="#929494"/><stop offset="0.3" stop-color="#8e9090"/><stop offset="0.4" stop-color="#888a89"/><stop offset="0.5" stop-color="#808281"/><stop offset="0.6" stop-color="#777978"/><stop offset="0.7" stop-color="#6c6e6d"/><stop offset="0.78" stop-color="#626463"/><stop offset="0.85" stop-color="#585959"/><stop offset="0.9" stop-color="#515050"/><stop offset="0.94" stop-color="#4a4948"/><stop offset="0.97" stop-color="#474443"/><stop offset="0.985" stop-color="#454342"/><stop offset="1" stop-color="#444140"/></linearGradient>
<linearGradient id="r85" gradientUnits="userSpaceOnUse" x1="445.8" y1="0" x2="862.9" y2="0"><stop offset="0" stop-color="#848686"/><stop offset="0.008" stop-color="#8a8c8c"/><stop offset="0.02" stop-color="#8d8f8e"/><stop offset="0.04" stop-color="#8f9190"/><stop offset="0.07" stop-color="#919392"/><stop offset="0.12" stop-color="#919393"/><stop offset="0.2" stop-color="#909292"/><stop offset="0.3" stop-color="#8c8e8d"/><stop offset="0.4" stop-color="#868887"/><stop offset="0.5" stop-color="#7e8080"/><stop offset="0.6" stop-color="#757777"/><stop offset="0.7" stop-color="#6b6d6c"/><stop offset="0.78" stop-color="#616362"/><stop offset="0.85" stop-color="#585958"/><stop offset="0.9" stop-color="#51504f"/><stop offset="0.94" stop-color="#4a4848"/><stop offset="0.97" stop-color="#474443"/><stop offset="0.985" stop-color="#454342"/><stop offset="1" stop-color="#444140"/></linearGradient>
<clipPath id="sph"><ellipse cx="653.2" cy="332" rx="298" ry="295.3" transform="rotate(71 653.2 332)"/></clipPath>
<clipPath id="holec"><polygon points="439.1,359.8 441.7,326.1 402.4,314.8 408.0,281.8 393.8,276.1 402.2,246.1 392.1,241.6 418.2,183.6 411.6,180.0 423.4,159.3 440.8,134.8 454.8,119.1 466.2,107.7 490.0,91.5 518.7,74.1 525.9,73.1 549.4,60.4 568.8,61.6 590.2,50.1 644.8,52.0 643.2,63.5 679.7,63.7 686.3,79.0 701.2,79.0 711.7,98.6 722.1,123.1 732.9,156.2 740.8,182.4 746.0,208.6 750.0,232.2 750.0,237.4 722.4,237.4 725.1,272.8 694.1,273.6 694.9,309.5 660.9,310.3 660.9,346.2 590.1,344.8 588.8,380.2 534.3,375.3 485.7,368.7"/></clipPath>
</defs>
<rect width="1153" height="544" fill="url(#bg)"/>
<g mask="url(#gmask)" opacity="0.09" stroke-width="1" shape-rendering="auto">
<line x1="-273684.6" y1="5646.1" x2="-1097.3" y2="14.0" stroke="#fff" />
<line x1="-676418.7" y1="14192.0" x2="-1069.0" y2="13.8" stroke="#fff" />
<line x1="-192106.1" y1="4090.5" x2="-1040.9" y2="13.6" stroke="#fff" />
<line x1="-335779.6" y1="7275.9" x2="-1013.2" y2="13.5" stroke="#fff" />
<line x1="-145518.3" y1="3202.2" x2="-985.6" y2="13.3" stroke="#fff" />
<line x1="-217817.0" y1="4880.8" x2="-958.4" y2="13.2" stroke="#fff" />
<line x1="-449334.6" y1="10256.3" x2="-931.4" y2="13.0" stroke="#fff" />
<line x1="-157971.3" y1="3665.8" x2="-904.6" y2="12.9" stroke="#fff" />
<line x1="-256160.2" y1="6059.4" x2="-878.0" y2="12.7" stroke="#fff" />
<line x1="-723580.9" y1="17454.3" x2="-851.7" y2="12.6" stroke="#fff" />
<line x1="-174772.4" y1="4291.2" x2="-825.7" y2="12.4" stroke="#fff" />
<line x1="-319476.9" y1="8005.7" x2="-799.8" y2="12.3" stroke="#fff" />
<line x1="-129913.1" y1="3316.6" x2="-774.2" y2="12.1" stroke="#fff" />
<line x1="-198680.4" y1="5181.2" x2="-748.8" y2="12.0" stroke="#fff" />
<line x1="-443948.9" y1="11831.7" x2="-723.7" y2="11.9" stroke="#fff" />
<line x1="-140590.4" y1="3823.0" x2="-698.7" y2="11.7" stroke="#fff" />
<line x1="-235414.5" y1="6548.8" x2="-674.0" y2="11.6" stroke="#fff" />
<line x1="-106441.4" y1="3024.5" x2="-649.5" y2="11.4" stroke="#fff" />
<line x1="-155233.0" y1="4517.5" x2="-625.2" y2="11.3" stroke="#fff" />
<line x1="-299079.2" y1="8918.8" x2="-601.1" y2="11.2" stroke="#fff" />
<line x1="-112789.4" y1="3442.2" x2="-577.2" y2="11.0" stroke="#fff" />
<line x1="-176553.5" y1="5528.6" x2="-553.6" y2="10.9" stroke="#fff" />
<line x1="-436427.5" y1="14031.9" x2="-530.1" y2="10.8" stroke="#fff" />
<line x1="-121238.4" y1="3998.1" x2="-506.8" y2="10.6" stroke="#fff" />
<line x1="-210469.5" y1="7137.1" x2="-483.7" y2="10.5" stroke="#fff" />
<line x1="-89735.1" y1="3126.4" x2="-460.8" y2="10.4" stroke="#fff" />
<line x1="-133038.4" y1="4774.4" x2="-438.1" y2="10.2" stroke="#fff" />
<line x1="-272821.6" y1="10094.3" x2="-415.6" y2="10.1" stroke="#fff" />
<line x1="-93914.4" y1="3580.6" x2="-393.3" y2="10.0" stroke="#fff" />
<line x1="-150675.9" y1="5934.9" x2="-371.1" y2="9.9" stroke="#fff" />
<line x1="-425185.7" y1="17320.3" x2="-349.2" y2="9.7" stroke="#fff" />
<line x1="-99559.9" y1="4194.2" x2="-327.4" y2="9.6" stroke="#fff" />
<line x1="-179906.5" y1="7858.0" x2="-305.8" y2="9.5" stroke="#fff" />
<line x1="-71472.9" y1="3237.8" x2="-284.3" y2="9.4" stroke="#fff" />
<line x1="-107607.8" y1="5068.9" x2="-263.1" y2="9.3" stroke="#fff" />
<line x1="-237755.5" y1="11664.0" x2="-242.0" y2="9.1" stroke="#fff" />
<line x1="-73004.8" y1="3734.0" x2="-221.1" y2="9.0" stroke="#fff" />
<line x1="-120005.7" y1="6416.3" x2="-200.3" y2="8.9" stroke="#fff" />
<line x1="-52712.6" y1="2951.1" x2="-179.7" y2="8.8" stroke="#fff" />
<line x1="-75108.6" y1="4415.4" x2="-159.3" y2="8.7" stroke="#fff" />
<line x1="-141586.8" y1="8761.8" x2="-139.0" y2="8.6" stroke="#fff" />
<line x1="-51426.6" y1="3360.0" x2="-118.9" y2="8.4" stroke="#fff" />
<line x1="-78177.9" y1="5409.6" x2="-98.9" y2="8.3" stroke="#fff" />
<line x1="-188555.3" y1="13866.6" x2="-79.1" y2="8.2" stroke="#fff" />
<line x1="-49713.0" y1="3904.8" x2="-59.5" y2="8.1" stroke="#fff" />
<line x1="-83075.7" y1="6996.1" x2="-40.0" y2="8.0" stroke="#fff" />
<line x1="-33546.1" y1="3050.1" x2="-20.7" y2="7.9" stroke="#fff" />
<line x1="-47316.0" y1="4666.9" x2="-1.5" y2="7.8" stroke="#fff" />
<line x1="-92128.4" y1="9928.4" x2="17.6" y2="7.7" stroke="#fff" />
<line x1="-29321.5" y1="3494.8" x2="36.5" y2="7.6" stroke="#fff" />
<line x1="-43724.8" y1="5808.5" x2="55.2" y2="7.5" stroke="#fff" />
<line x1="-18487.8" y1="2789.1" x2="73.9" y2="7.3" stroke="#fff" />
<line x1="-23607.2" y1="4096.2" x2="92.3" y2="7.2" stroke="#fff" />
<line x1="-37751.4" y1="7707.6" x2="110.7" y2="7.1" stroke="#fff" />
<line x1="-12587.6" y1="3158.3" x2="128.9" y2="7.0" stroke="#fff" />
<line x1="-15447.0" y1="4955.2" x2="147.0" y2="6.9" stroke="#fff" />
<line x1="-25848.7" y1="11491.7" x2="164.9" y2="6.8" stroke="#fff" />
<line x1="-4823.1" y1="3644.1" x2="182.7" y2="6.7" stroke="#fff" />
<line x1="-2842.4" y1="6281.9" x2="200.4" y2="6.6" stroke="#fff" />
<line x1="1391.7" y1="2877.2" x2="217.9" y2="6.5" stroke="#fff" />
<line x1="19195.9" y1="8601.6" x2="252.6" y2="6.3" stroke="#fff" />
<line x1="10426.5" y1="3277.1" x2="269.8" y2="6.2" stroke="#fff" />
<line x1="21466.1" y1="5289.1" x2="286.8" y2="6.1" stroke="#fff" />
<line x1="67592.4" y1="13695.7" x2="303.7" y2="6.0" stroke="#fff" />
<line x1="22479.4" y1="3810.6" x2="320.5" y2="6.0" stroke="#fff" />
<line x1="46454.2" y1="6852.7" x2="337.2" y2="5.9" stroke="#fff" />
<line x1="23053.3" y1="2973.2" x2="353.8" y2="5.8" stroke="#fff" />
<line x1="39366.2" y1="4558.1" x2="370.2" y2="5.7" stroke="#fff" />
<line x1="92895.1" y1="9758.6" x2="386.5" y2="5.6" stroke="#fff" />
<line x1="35814.2" y1="3408.2" x2="402.7" y2="5.5" stroke="#fff" />
<line x1="64723.9" y1="5680.5" x2="418.8" y2="5.4" stroke="#fff" />
<line x1="33680.5" y1="2717.5" x2="434.8" y2="5.3" stroke="#fff" />
<line x1="53096.8" y1="3997.3" x2="450.7" y2="5.2" stroke="#fff" />
<line x1="107060.7" y1="7554.4" x2="466.5" y2="5.1" stroke="#fff" />
<line x1="46748.0" y1="3078.2" x2="482.1" y2="5.0" stroke="#fff" />
<line x1="77821.7" y1="4840.1" x2="497.7" y2="5.0" stroke="#fff" />
<line x1="192012.3" y1="11314.6" x2="513.1" y2="4.9" stroke="#fff" />
<line x1="63962.7" y1="3553.5" x2="528.4" y2="4.8" stroke="#fff" />
<line x1="116115.8" y1="6145.4" x2="543.7" y2="4.7" stroke="#fff" />
<line x1="55875.6" y1="2802.8" x2="558.8" y2="4.6" stroke="#fff" />
<line x1="87671.6" y1="4208.1" x2="573.8" y2="4.5" stroke="#fff" />
<line x1="183373.3" y1="8438.0" x2="588.7" y2="4.4" stroke="#fff" />
<line x1="72775.8" y1="3193.6" x2="603.6" y2="4.4" stroke="#fff" />
<line x1="122403.5" y1="5167.0" x2="618.3" y2="4.3" stroke="#fff" />
<line x1="332437.2" y1="13519.1" x2="632.9" y2="4.2" stroke="#fff" />
<line x1="95348.2" y1="3715.6" x2="647.4" y2="4.1" stroke="#fff" />
<line x1="178174.4" y1="6706.8" x2="661.9" y2="4.0" stroke="#fff" />
<line x1="80067.7" y1="2895.8" x2="676.2" y2="3.9" stroke="#fff" />
<line x1="127024.2" y1="4448.1" x2="690.4" y2="3.9" stroke="#fff" />
<line x1="282406.6" y1="9584.6" x2="704.6" y2="3.8" stroke="#fff" />
<line x1="101499.5" y1="3320.9" x2="718.6" y2="3.7" stroke="#fff" />
<line x1="174702.0" y1="5550.6" x2="732.6" y2="3.6" stroke="#fff" />
<line x1="86200.8" y1="2645.3" x2="746.5" y2="3.5" stroke="#fff" />
<line x1="130563.2" y1="3897.4" x2="760.2" y2="3.5" stroke="#fff" />
<line x1="254605.0" y1="7398.3" x2="773.9" y2="3.4" stroke="#fff" />
<line x1="106538.9" y1="2997.6" x2="787.5" y2="3.3" stroke="#fff" />
<line x1="172218.4" y1="4723.6" x2="801.1" y2="3.2" stroke="#fff" />
<line x1="416082.0" y1="11132.4" x2="814.5" y2="3.2" stroke="#fff" />
<line x1="133360.6" y1="3462.1" x2="827.8" y2="3.1" stroke="#fff" />
<line x1="236910.6" y1="6006.8" x2="841.1" y2="3.0" stroke="#fff" />
<line x1="110743.0" y1="2727.8" x2="854.3" y2="2.9" stroke="#fff" />
<line x1="170354.1" y1="4102.8" x2="867.4" y2="2.9" stroke="#fff" />
<line x1="351054.0" y1="8270.9" x2="880.4" y2="2.8" stroke="#fff" />
<line x1="135627.4" y1="3109.4" x2="893.3" y2="2.7" stroke="#fff" />
<line x1="224659.4" y1="5043.4" x2="906.1" y2="2.6" stroke="#fff" />
<line x1="606429.6" y1="13336.3" x2="918.9" y2="2.6" stroke="#fff" />
<line x1="168902.9" y1="3619.6" x2="931.6" y2="2.5" stroke="#fff" />
<line x1="312140.9" y1="6558.5" x2="944.2" y2="2.4" stroke="#fff" />
<line x1="137501.5" y1="2817.8" x2="956.7" y2="2.4" stroke="#fff" />
<line x1="215674.6" y1="4336.8" x2="969.2" y2="2.3" stroke="#fff" />
<line x1="476571.3" y1="9406.4" x2="981.6" y2="2.2" stroke="#fff" />
<line x1="167741.4" y1="3232.8" x2="993.9" y2="2.1" stroke="#fff" />
<line x1="286241.9" y1="5418.9" x2="1006.1" y2="2.1" stroke="#fff" />
<line x1="139076.7" y1="2572.7" x2="1018.2" y2="2.0" stroke="#fff" />
<line x1="208803.6" y1="3796.5" x2="1030.3" y2="1.9" stroke="#fff" />
<line x1="404959.7" y1="7239.2" x2="1042.3" y2="1.9" stroke="#fff" />
<line x1="166790.6" y1="2916.3" x2="1054.2" y2="1.8" stroke="#fff" />
<line x1="267763.7" y1="4605.7" x2="1066.1" y2="1.7" stroke="#fff" />
<line x1="646629.7" y1="10944.9" x2="1077.9" y2="1.7" stroke="#fff" />
<line x1="203378.8" y1="3369.9" x2="1089.6" y2="1.6" stroke="#fff" />
<line x1="359584.6" y1="5866.0" x2="1101.3" y2="1.5" stroke="#fff" />
<line x1="165998.0" y1="2652.3" x2="1112.8" y2="1.5" stroke="#fff" />
<line x1="253916.5" y1="3996.4" x2="1124.3" y2="1.4" stroke="#fff" />
<line x1="522351.3" y1="8100.2" x2="1135.8" y2="1.3" stroke="#fff" />
<line x1="198987.3" y1="3024.5" x2="1147.2" y2="1.3" stroke="#fff" />
<line x1="328259.9" y1="4918.1" x2="1158.5" y2="1.2" stroke="#fff" />
<line x1="890051.9" y1="13147.1" x2="1169.7" y2="1.2" stroke="#fff" />
<line x1="243153.3" y1="3522.8" x2="1180.9" y2="1.1" stroke="#fff" />
<line x1="448411.7" y1="6407.7" x2="1192.0" y2="1.0" stroke="#fff" />
<line x1="195359.3" y1="2739.2" x2="1203.0" y2="1.0" stroke="#fff" />
<line x1="305334.5" y1="4224.3" x2="1214.0" y2="0.9" stroke="#fff" />
<line x1="675562.8" y1="9223.8" x2="1224.9" y2="0.8" stroke="#fff" />
<line x1="234547.0" y1="3144.1" x2="1235.8" y2="0.8" stroke="#fff" />
<line x1="399377.3" y1="5285.2" x2="1246.6" y2="0.7" stroke="#fff" />
<line x1="192311.8" y1="2499.5" x2="1257.3" y2="0.7" stroke="#fff" />
<line x1="287829.5" y1="3694.5" x2="1268.0" y2="0.6" stroke="#fff" />
<line x1="558205.7" y1="7077.1" x2="1278.6" y2="0.5" stroke="#fff" />
<line x1="227508.3" y1="2834.3" x2="1289.2" y2="0.5" stroke="#fff" />
<line x1="364478.6" y1="4486.4" x2="1299.6" y2="0.4" stroke="#fff" />
<line x1="883940.4" y1="10751.9" x2="1310.1" y2="0.4" stroke="#fff" />
<line x1="274025.8" y1="3276.8" x2="1320.4" y2="0.3" stroke="#fff" />
<line x1="484182.2" y1="5723.1" x2="1330.8" y2="0.2" stroke="#fff" />
<line x1="221644.7" y1="2576.3" x2="1341.0" y2="0.2" stroke="#fff" />
<line x1="338373.1" y1="3888.8" x2="1351.2" y2="0.1" stroke="#fff" />
<line x1="697383.5" y1="7925.7" x2="1361.4" y2="0.1" stroke="#fff" />
<line x1="262861.6" y1="2938.9" x2="1371.4" y2="0.0" stroke="#fff" />
<line x1="433231.7" y1="4791.1" x2="1381.5" y2="-0.0" stroke="#fff" />
<line x1="1183820.9" y1="12951.2" x2="1391.4" y2="-0.1" stroke="#fff" />
<line x1="318109.2" y1="3425.0" x2="1401.4" y2="-0.2" stroke="#fff" />
<line x1="587046.7" y1="6254.2" x2="1411.2" y2="-0.2" stroke="#fff" />
<line x1="253646.1" y1="2660.0" x2="1421.0" y2="-0.3" stroke="#fff" />
<line x1="396021.1" y1="4110.5" x2="1430.8" y2="-0.3" stroke="#fff" />
<line x1="879563.3" y1="9036.5" x2="1440.5" y2="-0.4" stroke="#fff" />
<line x1="301923.5" y1="3054.5" x2="1450.2" y2="-0.4" stroke="#fff" />
<line x1="514142.6" y1="5149.7" x2="1459.7" y2="-0.5" stroke="#fff" />
<line x1="245909.8" y1="2425.9" x2="1469.3" y2="-0.5" stroke="#fff" />
<line x1="367652.9" y1="3591.6" x2="1478.8" y2="-0.6" stroke="#fff" />
<line x1="714427.3" y1="6911.8" x2="1488.2" y2="-0.6" stroke="#fff" />
<line x1="288697.5" y1="2751.8" x2="1497.6" y2="-0.7" stroke="#fff" />
<line x1="462384.8" y1="4365.6" x2="1507.0" y2="-0.8" stroke="#fff" />
<line x1="1128316.1" y1="10553.2" x2="1516.3" y2="-0.8" stroke="#fff" />
<line x1="345309.9" y1="3182.9" x2="1525.5" y2="-0.9" stroke="#fff" />
<line x1="610748.9" y1="5577.9" x2="1534.7" y2="-0.9" stroke="#fff" />
<line x1="277687.3" y1="2499.7" x2="1543.9" y2="-1.0" stroke="#fff" />
<line x1="423738.1" y1="3780.1" x2="1553.0" y2="-1.0" stroke="#fff" />
<line x1="876274.1" y1="7747.4" x2="1562.0" y2="-1.1" stroke="#fff" />
<line x1="327256.8" y1="2852.7" x2="1571.0" y2="-1.1" stroke="#fff" />
<line x1="539602.2" y1="4662.5" x2="1580.0" y2="-1.2" stroke="#fff" />
<line x1="1488291.0" y1="12748.1" x2="1588.9" y2="-1.2" stroke="#fff" />
<line x1="393780.8" y1="3326.3" x2="1597.7" y2="-1.3" stroke="#fff" />
<line x1="728108.1" y1="6098.0" x2="1606.6" y2="-1.3" stroke="#fff" />
<line x1="312366.4" y1="2580.3" x2="1615.3" y2="-1.4" stroke="#fff" />
<line x1="487752.2" y1="3995.3" x2="1624.1" y2="-1.4" stroke="#fff" />
<line x1="1088764.4" y1="8844.5" x2="1632.7" y2="-1.5" stroke="#fff" />
<line x1="369878.4" y1="2964.2" x2="1641.4" y2="-1.5" stroke="#fff" />
<line x1="630573.2" y1="5012.2" x2="1650.0" y2="-1.6" stroke="#fff" />
<line x1="299874.5" y1="2351.8" x2="1658.5" y2="-1.6" stroke="#fff" />
<line x1="448285.8" y1="3487.6" x2="1667.0" y2="-1.7" stroke="#fff" />
<line x1="873712.0" y1="6743.3" x2="1675.5" y2="-1.7" stroke="#fff" />
<line x1="350363.6" y1="2668.5" x2="1683.9" y2="-1.8" stroke="#fff" />
<line x1="-14004.4" y1="15257.3" x2="4914.8" y2="44.3" stroke="#fff" />
<line x1="-32983.3" y1="9223.5" x2="4738.2" y2="42.1" stroke="#fff" />
<line x1="-41163.0" y1="6623.0" x2="4574.4" y2="40.1" stroke="#fff" />
<line x1="-92128.4" y1="9928.4" x2="4421.9" y2="38.3" stroke="#fff" />
<line x1="-159734.1" y1="10734.2" x2="4147.0" y2="34.9" stroke="#fff" />
<line x1="-129110.3" y1="7405.9" x2="4022.5" y2="33.4" stroke="#fff" />
<line x1="-237755.5" y1="11664.0" x2="3905.7" y2="32.0" stroke="#fff" />
<line x1="-179906.5" y1="7858.0" x2="3795.8" y2="30.6" stroke="#fff" />
<line x1="-328800.7" y1="12749.1" x2="3692.3" y2="29.4" stroke="#fff" />
<line x1="-236243.2" y1="8359.5" x2="3594.6" y2="28.2" stroke="#fff" />
<line x1="-436427.5" y1="14031.9" x2="3502.2" y2="27.1" stroke="#fff" />
<line x1="-299079.2" y1="8918.8" x2="3414.7" y2="26.0" stroke="#fff" />
<line x1="-565619.8" y1="15571.6" x2="3331.8" y2="25.0" stroke="#fff" />
<line x1="-369608.0" y1="9546.6" x2="3253.0" y2="24.0" stroke="#fff" />
<line x1="-723580.9" y1="17454.3" x2="3178.1" y2="23.1" stroke="#fff" />
<line x1="-449334.6" y1="10256.3" x2="3106.8" y2="22.2" stroke="#fff" />
<line x1="-335779.6" y1="7275.9" x2="3038.9" y2="21.4" stroke="#fff" />
<line x1="-540183.5" y1="11065.0" x2="2974.1" y2="20.6" stroke="#fff" />
<line x1="-393238.1" y1="7692.1" x2="2912.1" y2="19.9" stroke="#fff" />
<line x1="-644656.9" y1="11994.9" x2="2852.9" y2="19.2" stroke="#fff" />
<line x1="-456532.7" y1="8150.7" x2="2796.3" y2="18.5" stroke="#fff" />
<line x1="-766067.9" y1="13075.6" x2="2742.0" y2="17.8" stroke="#fff" />
<line x1="-526600.0" y1="8658.3" x2="2689.9" y2="17.2" stroke="#fff" />
<line x1="-908899.1" y1="14347.0" x2="2639.9" y2="16.6" stroke="#fff" />
<line x1="-102901.7" y1="1615.7" x2="2591.9" y2="16.0" stroke="#fff" />
<line x1="-54445.4" y1="850.3" x2="2545.8" y2="15.4" stroke="#fff" />
<line x1="-36972.1" y1="574.3" x2="2501.4" y2="14.9" stroke="#fff" />
<line x1="-27964.7" y1="432.0" x2="2458.7" y2="14.4" stroke="#fff" />
<line x1="-22470.3" y1="345.2" x2="2417.6" y2="13.9" stroke="#fff" />
<line x1="-18769.2" y1="286.7" x2="2377.9" y2="13.4" stroke="#fff" />
<line x1="-16106.6" y1="244.7" x2="2339.6" y2="12.9" stroke="#fff" />
<line x1="-14099.1" y1="213.0" x2="2302.6" y2="12.5" stroke="#fff" />
<line x1="-12531.5" y1="188.2" x2="2267.0" y2="12.0" stroke="#fff" />
<line x1="-11273.5" y1="168.3" x2="2232.5" y2="11.6" stroke="#fff" />
<line x1="-10241.5" y1="152.0" x2="2199.1" y2="11.2" stroke="#fff" />
<line x1="-9379.8" y1="138.4" x2="2166.8" y2="10.8" stroke="#fff" />
<line x1="-8649.3" y1="126.9" x2="2135.6" y2="10.4" stroke="#fff" />
<line x1="-8022.2" y1="117.0" x2="2105.3" y2="10.0" stroke="#fff" />
<line x1="-7478.0" y1="108.4" x2="2076.0" y2="9.7" stroke="#fff" />
<line x1="-7001.4" y1="100.9" x2="2047.6" y2="9.3" stroke="#fff" />
<line x1="-6580.3" y1="94.2" x2="2020.0" y2="9.0" stroke="#fff" />
<line x1="-6205.8" y1="88.3" x2="1993.2" y2="8.7" stroke="#fff" />
<line x1="-5870.3" y1="83.0" x2="1967.3" y2="8.4" stroke="#fff" />
<line x1="-5568.3" y1="78.2" x2="1942.0" y2="8.1" stroke="#fff" />
<line x1="-5294.8" y1="73.9" x2="1917.5" y2="7.8" stroke="#fff" />
<line x1="-5046.0" y1="70.0" x2="1893.7" y2="7.5" stroke="#fff" />
<line x1="-4818.8" y1="66.4" x2="1870.5" y2="7.2" stroke="#fff" />
<line x1="-4610.3" y1="63.1" x2="1847.9" y2="6.9" stroke="#fff" />
<line x1="-4418.5" y1="60.1" x2="1826.0" y2="6.6" stroke="#fff" />
<line x1="-4241.4" y1="57.3" x2="1804.6" y2="6.4" stroke="#fff" />
<line x1="-4077.3" y1="54.7" x2="1783.8" y2="6.1" stroke="#fff" />
<line x1="-3924.9" y1="52.3" x2="1763.5" y2="5.9" stroke="#fff" />
<line x1="-3782.9" y1="50.0" x2="1743.8" y2="5.6" stroke="#fff" />
<line x1="-3650.4" y1="47.9" x2="1724.5" y2="5.4" stroke="#fff" />
<line x1="-3526.4" y1="46.0" x2="1705.7" y2="5.2" stroke="#fff" />
<line x1="-3410.1" y1="44.1" x2="1687.4" y2="5.0" stroke="#fff" />
<line x1="-3300.8" y1="42.4" x2="1669.5" y2="4.7" stroke="#fff" />
<line x1="-3197.9" y1="40.8" x2="1652.1" y2="4.5" stroke="#fff" />
<line x1="-3100.9" y1="39.3" x2="1635.0" y2="4.3" stroke="#fff" />
<line x1="-3009.3" y1="37.8" x2="1618.4" y2="4.1" stroke="#fff" />
<line x1="-2922.6" y1="36.4" x2="1602.1" y2="3.9" stroke="#fff" />
<line x1="-2840.4" y1="35.1" x2="1586.3" y2="3.7" stroke="#fff" />
<line x1="-2762.5" y1="33.9" x2="1570.7" y2="3.5" stroke="#fff" />
<line x1="-2688.4" y1="32.7" x2="1555.5" y2="3.4" stroke="#fff" />
<line x1="-2617.9" y1="31.6" x2="1540.7" y2="3.2" stroke="#fff" />
<line x1="-2550.8" y1="30.6" x2="1526.2" y2="3.0" stroke="#fff" />
<line x1="-2486.8" y1="29.6" x2="1512.0" y2="2.8" stroke="#fff" />
<line x1="-2425.7" y1="28.6" x2="1498.1" y2="2.7" stroke="#fff" />
<line x1="-2367.3" y1="27.7" x2="1484.4" y2="2.5" stroke="#fff" />
<line x1="-2311.4" y1="26.8" x2="1471.1" y2="2.3" stroke="#fff" />
<line x1="-2257.9" y1="25.9" x2="1458.1" y2="2.2" stroke="#fff" />
<line x1="-2206.6" y1="25.1" x2="1445.3" y2="2.0" stroke="#fff" />
<line x1="-2157.4" y1="24.4" x2="1432.8" y2="1.9" stroke="#fff" />
<line x1="-2110.2" y1="23.6" x2="1420.5" y2="1.7" stroke="#fff" />
<line x1="-2064.8" y1="22.9" x2="1408.5" y2="1.6" stroke="#fff" />
<line x1="-2021.2" y1="22.2" x2="1396.7" y2="1.4" stroke="#fff" />
<line x1="-1979.2" y1="21.5" x2="1385.1" y2="1.3" stroke="#fff" />
<line x1="-1938.8" y1="20.9" x2="1373.8" y2="1.1" stroke="#fff" />
<line x1="-1899.8" y1="20.3" x2="1362.6" y2="1.0" stroke="#fff" />
<line x1="-1862.2" y1="19.7" x2="1351.7" y2="0.9" stroke="#fff" />
<line x1="-1825.9" y1="19.1" x2="1341.0" y2="0.7" stroke="#fff" />
<line x1="-1790.9" y1="18.6" x2="1330.5" y2="0.6" stroke="#fff" />
<line x1="-1757.1" y1="18.0" x2="1320.2" y2="0.5" stroke="#fff" />
<line x1="-1724.3" y1="17.5" x2="1310.1" y2="0.4" stroke="#fff" />
<line x1="-1692.7" y1="17.0" x2="1300.1" y2="0.2" stroke="#fff" />
<line x1="-1662.1" y1="16.5" x2="1290.4" y2="0.1" stroke="#fff" />
<line x1="-1632.4" y1="16.1" x2="1280.8" y2="0.0" stroke="#fff" />
<line x1="-1603.7" y1="15.6" x2="1271.3" y2="-0.1" stroke="#fff" />
<line x1="-1575.9" y1="15.2" x2="1262.1" y2="-0.2" stroke="#fff" />
<line x1="-1548.8" y1="14.7" x2="1253.0" y2="-0.3" stroke="#fff" />
<line x1="-1522.6" y1="14.3" x2="1244.0" y2="-0.4" stroke="#fff" />
<line x1="-1497.2" y1="13.9" x2="1235.3" y2="-0.6" stroke="#fff" />
<line x1="-1472.5" y1="13.5" x2="1226.6" y2="-0.7" stroke="#fff" />
</g>
<line x1="-13143.8" y1="1424.7" x2="3498.3" y2="98.8" stroke="#933646" stroke-width="1.3"/>
<line x1="210.3" y1="-12.7" x2="1356.3" y2="865.3" stroke="url(#gline)" stroke-width="1.3"/>
<g clip-path="url(#sph)">
<rect x="340" y="30" width="630" height="6.6" fill="url(#r0)"/>
<rect x="340" y="36" width="630" height="6.6" fill="url(#r1)"/>
<rect x="340" y="42" width="630" height="6.6" fill="url(#r2)"/>
<rect x="340" y="48" width="630" height="6.6" fill="url(#r3)"/>
<rect x="340" y="54" width="630" height="6.6" fill="url(#r4)"/>
<rect x="340" y="60" width="630" height="6.6" fill="url(#r5)"/>
<rect x="340" y="66" width="630" height="6.6" fill="url(#r6)"/>
<rect x="340" y="72" width="630" height="6.6" fill="url(#r7)"/>
<rect x="340" y="78" width="630" height="6.6" fill="url(#r8)"/>
<rect x="340" y="84" width="630" height="6.6" fill="url(#r9)"/>
<rect x="340" y="90" width="630" height="6.6" fill="url(#r10)"/>
<rect x="340" y="96" width="630" height="6.6" fill="url(#r11)"/>
<rect x="340" y="102" width="630" height="6.6" fill="url(#r12)"/>
<rect x="340" y="108" width="630" height="6.6" fill="url(#r13)"/>
<rect x="340" y="114" width="630" height="6.6" fill="url(#r14)"/>
<rect x="340" y="120" width="630" height="6.6" fill="url(#r15)"/>
<rect x="340" y="126" width="630" height="6.6" fill="url(#r16)"/>
<rect x="340" y="132" width="630" height="6.6" fill="url(#r17)"/>
<rect x="340" y="138" width="630" height="6.6" fill="url(#r18)"/>
<rect x="340" y="144" width="630" height="6.6" fill="url(#r19)"/>
<rect x="340" y="150" width="630" height="6.6" fill="url(#r20)"/>
<rect x="340" y="156" width="630" height="6.6" fill="url(#r21)"/>
<rect x="340" y="162" width="630" height="6.6" fill="url(#r22)"/>
<rect x="340" y="168" width="630" height="6.6" fill="url(#r23)"/>
<rect x="340" y="174" width="630" height="6.6" fill="url(#r24)"/>
<rect x="340" y="180" width="630" height="6.6" fill="url(#r25)"/>
<rect x="340" y="186" width="630" height="6.6" fill="url(#r26)"/>
<rect x="340" y="192" width="630" height="6.6" fill="url(#r27)"/>
<rect x="340" y="198" width="630" height="6.6" fill="url(#r28)"/>
<rect x="340" y="204" width="630" height="6.6" fill="url(#r29)"/>
<rect x="340" y="210" width="630" height="6.6" fill="url(#r30)"/>
<rect x="340" y="216" width="630" height="6.6" fill="url(#r31)"/>
<rect x="340" y="222" width="630" height="6.6" fill="url(#r32)"/>
<rect x="340" y="228" width="630" height="6.6" fill="url(#r33)"/>
<rect x="340" y="234" width="630" height="6.6" fill="url(#r34)"/>
<rect x="340" y="240" width="630" height="6.6" fill="url(#r35)"/>
<rect x="340" y="246" width="630" height="6.6" fill="url(#r36)"/>
<rect x="340" y="252" width="630" height="6.6" fill="url(#r37)"/>
<rect x="340" y="258" width="630" height="6.6" fill="url(#r38)"/>
<rect x="340" y="264" width="630" height="6.6" fill="url(#r39)"/>
<rect x="340" y="270" width="630" height="6.6" fill="url(#r40)"/>
<rect x="340" y="276" width="630" height="6.6" fill="url(#r41)"/>
<rect x="340" y="282" width="630" height="6.6" fill="url(#r42)"/>
<rect x="340" y="288" width="630" height="6.6" fill="url(#r43)"/>
<rect x="340" y="294" width="630" height="6.6" fill="url(#r44)"/>
<rect x="340" y="300" width="630" height="6.6" fill="url(#r45)"/>
<rect x="340" y="306" width="630" height="6.6" fill="url(#r46)"/>
<rect x="340" y="312" width="630" height="6.6" fill="url(#r47)"/>
<rect x="340" y="318" width="630" height="6.6" fill="url(#r48)"/>
<rect x="340" y="324" width="630" height="6.6" fill="url(#r49)"/>
<rect x="340" y="330" width="630" height="6.6" fill="url(#r50)"/>
<rect x="340" y="336" width="630" height="6.6" fill="url(#r51)"/>
<rect x="340" y="342" width="630" height="6.6" fill="url(#r52)"/>
<rect x="340" y="348" width="630" height="6.6" fill="url(#r53)"/>
<rect x="340" y="354" width="630" height="6.6" fill="url(#r54)"/>
<rect x="340" y="360" width="630" height="6.6" fill="url(#r55)"/>
<rect x="340" y="366" width="630" height="6.6" fill="url(#r56)"/>
<rect x="340" y="372" width="630" height="6.6" fill="url(#r57)"/>
<rect x="340" y="378" width="630" height="6.6" fill="url(#r58)"/>
<rect x="340" y="384" width="630" height="6.6" fill="url(#r59)"/>
<rect x="340" y="390" width="630" height="6.6" fill="url(#r60)"/>
<rect x="340" y="396" width="630" height="6.6" fill="url(#r61)"/>
<rect x="340" y="402" width="630" height="6.6" fill="url(#r62)"/>
<rect x="340" y="408" width="630" height="6.6" fill="url(#r63)"/>
<rect x="340" y="414" width="630" height="6.6" fill="url(#r64)"/>
<rect x="340" y="420" width="630" height="6.6" fill="url(#r65)"/>
<rect x="340" y="426" width="630" height="6.6" fill="url(#r66)"/>
<rect x="340" y="432" width="630" height="6.6" fill="url(#r67)"/>
<rect x="340" y="438" width="630" height="6.6" fill="url(#r68)"/>
<rect x="340" y="444" width="630" height="6.6" fill="url(#r69)"/>
<rect x="340" y="450" width="630" height="6.6" fill="url(#r70)"/>
<rect x="340" y="456" width="630" height="6.6" fill="url(#r71)"/>
<rect x="340" y="462" width="630" height="6.6" fill="url(#r72)"/>
<rect x="340" y="468" width="630" height="6.6" fill="url(#r73)"/>
<rect x="340" y="474" width="630" height="6.6" fill="url(#r74)"/>
<rect x="340" y="480" width="630" height="6.6" fill="url(#r75)"/>
<rect x="340" y="486" width="630" height="6.6" fill="url(#r76)"/>
<rect x="340" y="492" width="630" height="6.6" fill="url(#r77)"/>
<rect x="340" y="498" width="630" height="6.6" fill="url(#r78)"/>
<rect x="340" y="504" width="630" height="6.6" fill="url(#r79)"/>
<rect x="340" y="510" width="630" height="6.6" fill="url(#r80)"/>
<rect x="340" y="516" width="630" height="6.6" fill="url(#r81)"/>
<rect x="340" y="522" width="630" height="6.6" fill="url(#r82)"/>
<rect x="340" y="528" width="630" height="6.6" fill="url(#r83)"/>
<rect x="340" y="534" width="630" height="6.6" fill="url(#r84)"/>
<rect x="340" y="540" width="630" height="6.6" fill="url(#r85)"/>
<ellipse cx="653.2" cy="332" rx="298" ry="295.3" transform="rotate(71 653.2 332)" fill="url(#rim)"/>
</g>
<polygon points="439.1,359.8 441.7,326.1 402.4,314.8 408.0,281.8 393.8,276.1 402.2,246.1 392.1,241.6 418.2,183.6 411.6,180.0 423.4,159.3 440.8,134.8 454.8,119.1 466.2,107.7 490.0,91.5 518.7,74.1 525.9,73.1 549.4,60.4 568.8,61.6 590.2,50.1 644.8,52.0 643.2,63.5 679.7,63.7 686.3,79.0 701.2,79.0 711.7,98.6 722.1,123.1 732.9,156.2 740.8,182.4 746.0,208.6 750.0,232.2 750.0,237.4 722.4,237.4 725.1,272.8 694.1,273.6 694.9,309.5 660.9,310.3 660.9,346.2 590.1,344.8 588.8,380.2 534.3,375.3 485.7,368.7" fill="url(#inner)"/>
<polygon points="439.1,359.8 441.7,326.1 402.4,314.8 408.0,281.8 393.8,276.1 402.2,246.1 392.1,241.6 418.2,183.6 411.6,180.0 423.4,159.3 440.8,134.8 454.8,119.1 466.2,107.7 490.0,91.5 518.7,74.1 525.9,73.1 549.4,60.4 568.8,61.6 590.2,50.1 644.8,52.0 643.2,63.5 679.7,63.7 686.3,79.0 701.2,79.0 711.7,98.6 722.1,123.1 732.9,156.2 740.8,182.4 746.0,208.6 750.0,232.2 750.0,237.4 722.4,237.4 725.1,272.8 694.1,273.6 694.9,309.5 660.9,310.3 660.9,346.2 590.1,344.8 588.8,380.2 534.3,375.3 485.7,368.7" fill="url(#ishadow)"/>
<g clip-path="url(#holec)">
<line x1="-13143.8" y1="1424.7" x2="3498.3" y2="98.8" stroke="#b4566a" stroke-width="1.2"/>
<line x1="578.3" y1="268.9" x2="1356.3" y2="865.3" stroke="#7f9d5a" stroke-width="1.5"/>
</g>
<!-- floor lines in front of sphere -->
<g clip-path="url(#sph)" stroke="#6b6d6c" stroke-width="1" opacity="0.55">
<line x1="357.9" y1="349.0" x2="640.3" y2="1039.5"/>
<line x1="-563.5" y1="549.0" x2="1581.9" y2="329.2"/>
<line x1="910.7" y1="304.9" x2="1349.9" y2="504.2" opacity="0.4"/>
</g>
<line x1="765.7" y1="412.8" x2="1356.3" y2="865.3" stroke="#74a12c" stroke-width="2"/>
<!-- cube -->
<polygon points="479.7,94.1 554.6,92.1 556.0,165.3 479.7,169.5" fill="#86888a"/>
<polygon points="465.8,88.5 479.7,94.1 479.7,169.5 468.6,162.5 467.2,131.8" fill="#7b7d7e"/>
<polygon points="465.8,88.5 538.4,86.2 554.6,92.1 479.7,94.1" fill="#7a7b7d"/>
<polygon points="465.8,88.5 500.0,87.6 538.4,86.2 554.6,92.1 555.5,130.0 556.0,165.3 520.0,167.8 479.7,169.5 468.6,162.5 467.2,131.8" fill="none" stroke="#f0a13c" stroke-width="2" stroke-linejoin="round"/>
<circle cx="509.9" cy="127.3" r="2.6" fill="#f5992e" stroke="#5a4630" stroke-width="1"/>
</svg>
<div id="sep"></div>
<div id="ne">
<svg id="dots" width="1153" height="600"><defs><pattern id="dp" x="5" y="16.8" width="30.06" height="30.03" patternUnits="userSpaceOnUse"><rect x="0" y="0" width="3" height="3" fill="#2e2e2e"/></pattern></defs><rect x="0" y="32" width="1153" height="568" fill="url(#dp)"/></svg>
<div id="hdr">
  <div class="hb" style="left:0;width:31.5px;border-radius:4.5px 0 0 4.5px">
    <svg width="31" height="19" viewBox="0 0 31 19" style="position:absolute;left:-1px;top:-1px">
      <rect x="6.9" y="3" width="8.3" height="5.9" rx="1.3" fill="#a9a9a9"/>
      <rect x="4.8" y="11" width="8.3" height="5.9" rx="1.3" fill="#a9a9a9"/>
      <path d="M7.8 7 H14.3 M5.7 15 H12.2" stroke="#4a4a4a" stroke-width="0.9"/>
      <path d="M16.2 4.3 Q18.8 4.6 18.8 7 V11.6 Q18.8 14 15 14.3" fill="none" stroke="#8e8e8e" stroke-width="1"/>
      <path d="M16 3.2 L17.4 4.6 L16 6 Z M15.4 12.9 L14 14.3 L15.4 15.7 Z" fill="#8e8e8e"/>
      <path d="M21.8 8.9 L25.3 12.3 L28.7 8.9" fill="none" stroke="#7c7c7c" stroke-width="1.1"/>
    </svg>
  </div>
  <div class="hb" style="left:31.5px;width:122.5px;background:#1d1d1d"><span class="ht">Geometry Nodes.001</span></div>
  <div class="hb hl" style="left:154px;width:20.5px">
    <svg width="21" height="19" viewBox="0 0 21 19" style="position:absolute;left:-1px;top:-1px"><path d="M11.45 2.9 C9.5 4.3 7.2 5 4.9 5.1 C4.7 10.8 6.6 14.6 11.45 17 C16.3 14.6 18.2 10.8 18 5.1 C15.7 5 13.4 4.3 11.45 2.9Z" fill="none" stroke="#777" stroke-width="1.05"/></svg>
  </div>
  <div class="hb hl" style="left:174.5px;width:20px">
    <svg width="20" height="19" viewBox="0 0 20 19" style="position:absolute;left:-1px;top:-1px"><path d="M7.3 6.6 H4.2 V16.4 H13.8 V13.4" fill="none" stroke="#777" stroke-width="1.05"/><path d="M8.2 3.5 H14.4 L17.2 6.3 V12.6 H8.2 Z" fill="none" stroke="#777" stroke-width="1.05"/><path d="M14.2 3.4 L17.3 6.5 H14.2 Z" fill="#777"/></svg>
  </div>
  <div class="hb hl" style="left:194.5px;width:20.2px;border-radius:0 4.5px 4.5px 0">
    <svg width="20" height="19" viewBox="0 0 20 19" style="position:absolute;left:-1px;top:-1px"><path d="M6.6 6 L14.8 14 M14.8 6 L6.6 14" stroke="#757575" stroke-width="1.05"/></svg>
  </div>
</div>
<svg id="pin" width="24" height="24" viewBox="0 0 24 24" style="position:absolute;left:726px;top:5px">
  <g transform="translate(15.3 5.4) rotate(135)" fill="#efefef" stroke="none">
    <path d="M0 -2.9 V2.9" stroke="#efefef" stroke-width="2.3" stroke-linecap="round" fill="none"/>
    <path d="M0.6 -2.3 H4.6 L8.2 -5 V5 L4.6 2.3 H0.6 Z"/>
    <path d="M8 0 H15.6" stroke="#efefef" stroke-width="1.4" stroke-linecap="round" fill="none"/>
  </g>
</svg>

<svg id="wires" width="1153" height="600" viewBox="0 545 1153 600" style="position:absolute;left:0;top:0">
  <path d="M548 645.6 C 575.7 645.6, 603.3 797.6, 631 797.6" fill="none" stroke="#111" stroke-width="4" opacity="0.5"/>
  <path d="M548 645.6 C 575.7 645.6, 603.3 797.6, 631 797.6" fill="none" stroke="#00d6a3" stroke-width="2.2"/>
  <path d="M841 677.2 C 863.5 677.2, 886.1 675.8, 908.6 675.8" fill="none" stroke="#111" stroke-width="4" opacity="0.5"/>
  <path d="M841 677.2 C 863.5 677.2, 886.1 675.8, 908.6 675.8" fill="none" stroke="#00d6a3" stroke-width="2.2"/>
  <path d="M548 855.7 C 575.7 855.7, 603.3 830.7, 631 830.7" fill="none" stroke="#111" stroke-width="3" opacity="0.5"/>
  <path d="M548 855.7 C 575.7 855.7, 603.3 830.7, 631 830.7" fill="none" stroke="#c5a1cf" stroke-width="1.2" stroke-dasharray="6 0.8"/>
  <path d="M247 886 C 277.0 886, 307.0 1014, 337 1014" fill="none" stroke="#111" stroke-width="3" opacity="0.5"/>
  <path d="M247 886 C 277.0 886, 307.0 1014, 337 1014" fill="none" stroke="#6363c7" stroke-width="1.2"/>
  <path d="M247 1006.1 C 277.0 1006.1, 307.0 1046.6, 337 1046.6" fill="none" stroke="#111" stroke-width="4" opacity="0.5"/>
  <path d="M247 1006.1 C 277.0 1006.1, 307.0 1046.6, 337 1046.6" fill="none" stroke="#6363c7" stroke-width="2.2"/>
</svg>

<!-- UV Sphere -->
<div class="node" style="left:337.5px;top:48px;width:210.5px;height:178.5px">
  <div class="nh geo"><svg class="chev" viewBox="0 0 14 10"><path d="M0.6 1.8 L7.2 8.9 L13.8 1.8"/></svg><span style="letter-spacing:0.12px;">UV Sphere</span></div>
  <div class="out" style="letter-spacing:0.17px;margin-right:-0.17px;top:42.9px">Mesh</div>
  <div class="fld" style="top:75.5px"><span class="l" style="letter-spacing:0.6px;">Segments</span><span class="r" style="letter-spacing:1.1px;margin-right:-1.1px;">64</span></div>
  <div class="fld" style="top:108.7px"><span class="l" style="letter-spacing:0.05px;">Rings</span><span class="r" style="letter-spacing:0.1px;margin-right:-0.1px;">32</span></div>
  <div class="fld" style="top:141.8px"><span class="l">Radius</span><span class="r" style="letter-spacing:1.15px;margin-right:-1.15px;">1 m</span></div>
</div>
<!-- Delete Geometry -->
<div class="node" style="left:631px;top:80px;width:210px;height:227.5px">
  <div class="nh geo"><svg class="chev" viewBox="0 0 14 10"><path d="M0.6 1.8 L7.2 8.9 L13.8 1.8"/></svg><span style="letter-spacing:0.52px;">Delete Geometry</span></div>
  <div class="out" style="letter-spacing:0.61px;margin-right:-0.61px;top:42.5px">Geometry</div>
  <div class="dd" style="top:82px"><span>Face</span><svg class="dchev" viewBox="0 0 10 7"><path d="M1 1 L5 5.3 L9 1"/></svg></div>
  <div class="dd" style="top:120px"><span style="letter-spacing:0.2px;">All</span><svg class="dchev" viewBox="0 0 10 7"><path d="M1 1 L5 5.3 L9 1"/></svg></div>
  <div class="inp" style="letter-spacing:0.61px;top:162.9px">Geometry</div>
  <div class="inp" style="letter-spacing:0.53px;top:196px">Selection</div>
</div>
<!-- Group Output -->
<div class="node" style="left:908.5px;top:77.5px;width:210.5px;height:108px">
  <div class="nh grp" style="height:32.5px"><svg class="chev" viewBox="0 0 14 10"><path d="M0.6 1.8 L7.2 8.9 L13.8 1.8"/></svg><span style="letter-spacing:0.52px;">Group Output</span></div>
  <div class="inp" style="letter-spacing:0.61px;top:43.6px">Geometry</div>
</div>
<!-- Less Than -->
<div class="node" style="left:337.5px;top:258px;width:210.5px;height:302px">
  <div class="nh conv"><svg class="chev" viewBox="0 0 14 10"><path d="M0.6 1.8 L7.2 8.9 L13.8 1.8"/></svg><span style="letter-spacing:0.24px;">Less Than</span></div>
  <div class="out" style="letter-spacing:0.04px;margin-right:-0.04px;top:43px">Result</div>
  <div class="dd" style="top:83.1px"><span style="letter-spacing:0.78px;">Vector</span><svg class="dchev" viewBox="0 0 10 7"><path d="M1 1 L5 5.3 L9 1"/></svg></div>
  <div class="dd" style="top:121.2px"><span style="letter-spacing:0.68px;">Direction</span><svg class="dchev" viewBox="0 0 10 7"><path d="M1 1 L5 5.3 L9 1"/></svg></div>
  <div class="dd" style="top:158.4px"><span style="letter-spacing:0.24px;">Less Than</span><svg class="dchev" viewBox="0 0 10 7"><path d="M1 1 L5 5.3 L9 1"/></svg></div>
  <div class="inp" style="letter-spacing:-1.1px;top:201.3px">A</div>
  <div class="inp" style="letter-spacing:-0.7px;top:233.9px">B</div>
  <div class="fld" style="top:263.2px"><span class="l" style="letter-spacing:0.12px;">Angle</span><span class="r" style="letter-spacing:0.7px;margin-right:-0.7px;">32.9°</span></div>
</div>
<!-- Normal -->
<div class="node" style="left:37px;top:288.7px;width:210px;height:74.8px">
  <div class="nh inpt"><svg class="chev" viewBox="0 0 14 10"><path d="M0.6 1.8 L7.2 8.9 L13.8 1.8"/></svg><span style="letter-spacing:0.82px;">Normal</span></div>
  <div class="out" style="letter-spacing:0.82px;margin-right:-0.82px;top:42.6px">Normal</div>
</div>
<!-- Object Info -->
<div class="node" style="left:37px;top:409px;width:210px;height:163px">
  <div class="nh inpt"><svg class="chev" viewBox="0 0 14 10"><path d="M0.6 1.8 L7.2 8.9 L13.8 1.8"/></svg><span style="letter-spacing:0.25px;">Object Info</span></div>
  <div class="out" style="letter-spacing:0.61px;margin-right:-0.61px;top:42.4px">Location</div>
  <div class="btn on" style="letter-spacing:0.27px;left:16px;top:87px;width:88px;border-radius:4px 0 0 4px">Original</div>
  <div class="btn" style="letter-spacing:0.39px;left:104.5px;top:87px;width:89.5px;border-radius:0 4px 4px 0">Relative</div>
  <div class="txt" style="top:123.3px">
    <svg width="24" height="24" viewBox="0 0 24 24" style="position:absolute;left:4.5px;top:1.7px">
      <path d="M1.7 7 V1.7 H7 M16.2 1.7 H21.5 V7 M21.5 16.2 V21.5 H16.2 M7 21.5 H1.7 V16.2" fill="none" stroke="#9a9a9a" stroke-width="1.5"/>
      <rect x="5.6" y="5.6" width="12" height="12" rx="0.8" fill="#e4e4e4"/>
    </svg>
    <span style="letter-spacing:0.05px;">Cube</span>
    <svg width="14" height="14" viewBox="0 0 14 14" style="position:absolute;right:8px;top:7.5px"><path d="M1.5 1.5 L12.5 12.5 M12.5 1.5 L1.5 12.5" stroke="#c8c8c8" stroke-width="1.4"/></svg>
  </div>
</div>

<!-- sockets -->
<svg id="socks" width="1153" height="600" viewBox="0 545 1153 600" style="position:absolute;left:0;top:0">
  <g stroke="#161616" stroke-width="1.2">
  <circle cx="548" cy="645.6" r="6.3" fill="#00d6a3"/>
  <circle cx="337" cy="683" r="6.3" fill="#598c5c"/>
  <circle cx="337" cy="716" r="6.3" fill="#598c5c"/>
  <circle cx="337" cy="749" r="6.3" fill="#a1a1a1"/>
  <circle cx="841" cy="677.2" r="6.3" fill="#00d6a3"/>
  <circle cx="631" cy="797.6" r="6.3" fill="#00d6a3"/>
  <circle cx="908.6" cy="675.8" r="6.3" fill="#00d6a3"/>
  <circle cx="247" cy="1006.1" r="6.3" fill="#6363c7"/>
  <circle cx="37" cy="1092.2" r="6.3" fill="#ed9e5c"/>
  <path d="M631 823.2 L638.5 830.7 L631 838.2 L623.5 830.7 Z" fill="#cca6d6"/>
  <path d="M548 848.2 L555.5 855.7 L548 863.2 L540.5 855.7 Z" fill="#cca6d6"/>
  <path d="M247 878.5 L254.5 886 L247 893.5 L239.5 886 Z" fill="#6363c7"/>
  <path d="M337 1006.5 L344.5 1014 L337 1021.5 L329.5 1014 Z" fill="#6363c7"/>
  <path d="M337 1039.1 L344.5 1046.6 L337 1054.1 L329.5 1046.6 Z" fill="#6363c7"/>
  <path d="M337 1072.3 L344.5 1079.8 L337 1087.3 L329.5 1079.8 Z" fill="#a1a1a1"/>
  </g>
  <circle cx="908.6" cy="708.9" r="6.6" fill="#2b2b2b" stroke="#8a8a8a" stroke-width="1.5"/>
  <circle cx="337" cy="1046.6" r="2" fill="#161616"/>
  <circle cx="337" cy="1079.8" r="2" fill="#161616"/>
</svg>
</div>

</body></html>
